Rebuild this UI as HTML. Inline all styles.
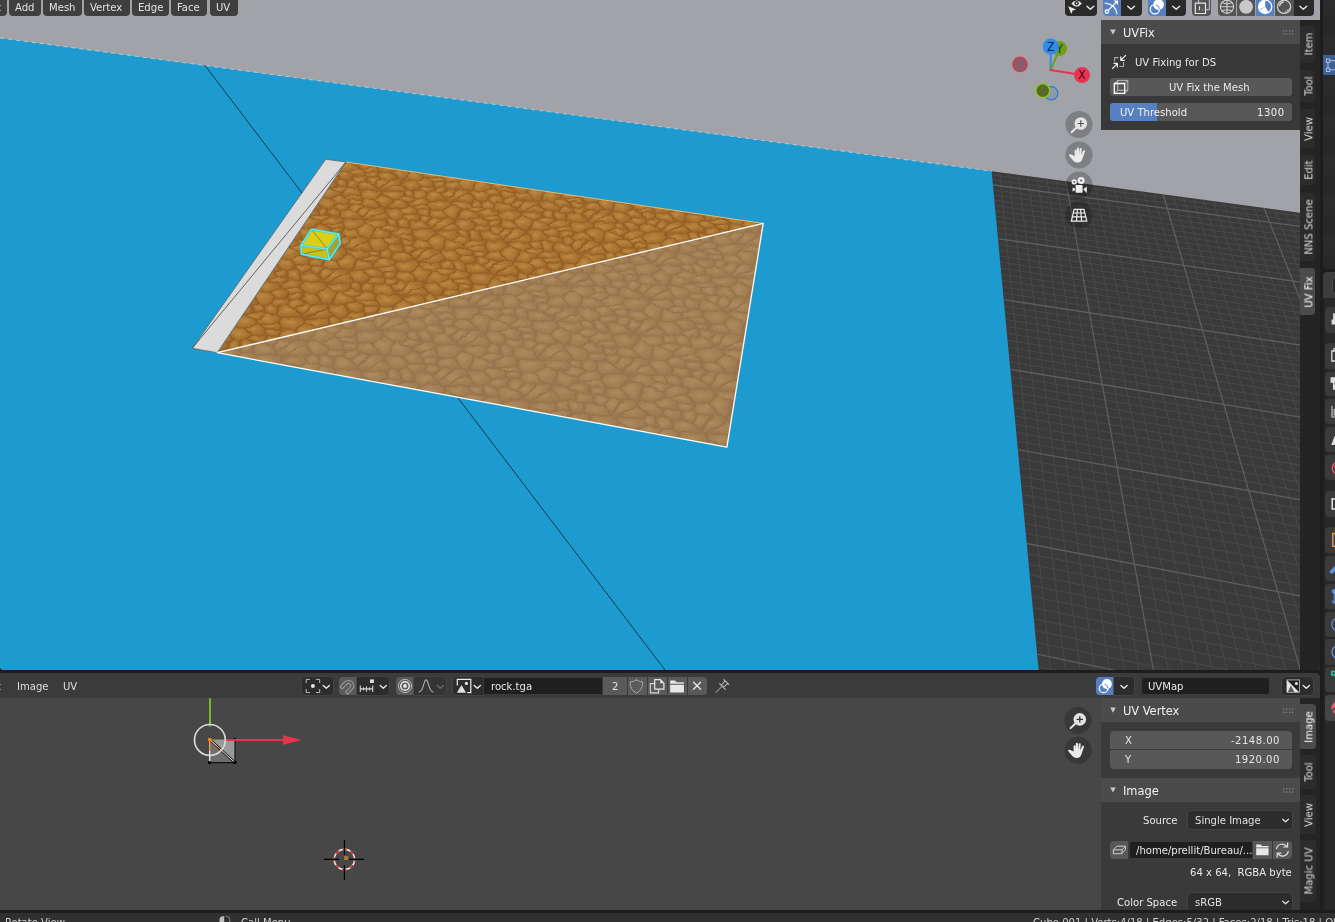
<!DOCTYPE html><html><head><meta charset="utf-8"><title>Blender</title><style>

*{box-sizing:border-box;margin:0;padding:0}
html,body{width:1335px;height:922px;overflow:hidden;background:#1d1d1d}
body{position:relative;font-family:"DejaVu Sans Condensed","Liberation Sans",sans-serif;font-size:11.2px;color:#e4e4e4;line-height:1}
.abs{position:absolute}
#v3d{position:absolute;left:0;top:0;width:1320px;height:670px;overflow:hidden;background:#a1a3a8;border-radius:0 0 4px 4px}
#img{position:absolute;left:0;top:673px;width:1320px;height:236.8px;overflow:hidden;background:#474747;border-radius:0 5px 0 0}
#props{position:absolute;left:1322.8px;top:0;width:13px;height:909.8px;background:#1d1d1d;overflow:hidden}
#status{position:absolute;left:0;top:912.5px;width:1335px;height:10px;background:#303030;overflow:hidden}
.t{position:absolute;white-space:nowrap;will-change:transform}
.btn{position:absolute;background:#585858;border-radius:3px}
svg{position:absolute;left:0;top:0;overflow:visible}

</style></head><body>
<div id="v3d">
<svg width="1320" height="670" viewBox="0 0 1320 670">
<defs><clipPath id="gclip"><polygon points="992,171.3 1320,215.4 1320,670 1039,670"/></clipPath></defs>
<polygon points="0,38.0 992,171.3 1039,670 0,670" fill="#1d9bd1"/>
<polygon points="991.6,171.3 1320,215.4 1320,670 1038.6,670" fill="#3a3a3a"/>
<line x1="0" y1="38.0" x2="992" y2="171.3" stroke="#fff" stroke-opacity="0.55" stroke-width="0.8" stroke-dasharray="4 4"/>
<g clip-path="url(#gclip)" fill="none">
<path d="M925.1 151.6L933.8 706.3M934.2 152.8L948.9 709.7M943.3 154.0L964.1 713.0M952.4 155.2L979.4 716.4M961.5 156.4L994.8 719.8M979.9 158.8L1025.8 726.7M989.1 160.0L1041.4 730.2M998.4 161.3L1057.1 733.7M1007.6 162.5L1072.9 737.1M1016.9 163.7L1088.8 740.7M1026.3 164.9L1104.7 744.2M1035.6 166.2L1120.7 747.7M1045.0 167.4L1136.8 751.3M1054.4 168.6L1153.0 754.9M1073.4 171.1L1185.6 762.1M1082.9 172.4L1202.0 765.8M1092.4 173.6L1218.5 769.4M1101.9 174.9L1235.1 773.1M1111.5 176.1L1251.8 776.8M1121.2 177.4L1268.6 780.5M1130.8 178.6L1285.4 784.3M1140.5 179.9L1302.4 788.0M1150.2 181.2L1319.4 791.8M1169.7 183.8L1353.8 799.4M1179.5 185.0L1371.1 803.3M1189.3 186.3L1388.5 807.1M1199.2 187.6L1406.0 811.0M1209.1 188.9L1423.6 814.9M1219.0 190.2L1441.2 818.8M1228.9 191.5L1459.0 822.7M1238.9 192.8L1476.9 826.7M1248.9 194.2L1494.9 830.7M1269.0 196.8L1531.1 838.7M1279.2 198.1L1549.3 842.8M1289.3 199.5L1567.7 846.8M1299.5 200.8L1586.2 850.9M1309.7 202.1L1604.7 855.1M1319.9 203.5L1623.4 859.2M1330.2 204.8L1642.2 863.3M1340.5 206.2L1661.0 867.5M1350.8 207.5L1680.0 871.7M943.3 154.0L1340.5 206.2M943.5 158.8L1343.1 211.5M943.6 163.5L1345.7 217.0M943.8 168.4L1348.3 222.4M944.0 173.3L1351.0 228.0M944.4 183.3L1356.5 239.3M944.6 188.3L1359.3 245.1M944.8 193.5L1362.2 250.9M944.9 198.7L1365.0 256.9M945.1 203.9L1367.9 262.9M945.3 209.3L1370.9 268.9M945.5 214.6L1373.9 275.1M945.7 220.1L1376.9 281.3M945.9 225.6L1379.9 287.6M946.4 236.9L1386.2 300.5M946.6 242.6L1389.4 307.1M946.8 248.4L1392.6 313.7M947.0 254.3L1395.9 320.5M947.2 260.2L1399.2 327.3M947.5 266.2L1402.5 334.3M947.7 272.3L1406.0 341.3M947.9 278.5L1409.4 348.4M948.2 284.8L1412.9 355.7M948.6 297.6L1420.1 370.4M948.9 304.1L1423.7 378.0M949.1 310.7L1427.4 385.6M949.4 317.4L1431.2 393.4M949.6 324.2L1435.0 401.3M949.9 331.0L1438.9 409.3M950.1 338.0L1442.8 417.4M950.4 345.1L1446.8 425.6M950.7 352.3L1450.9 434.0M951.2 366.9L1459.2 451.1M951.5 374.4L1463.4 459.9M951.8 382.0L1467.7 468.8M952.1 389.7L1472.1 477.8M952.4 397.5L1476.6 487.0M952.7 405.4L1481.1 496.3M953.0 413.5L1485.7 505.8M953.3 421.6L1490.4 515.4M953.6 429.9L1495.1 525.2M954.2 446.9L1504.8 545.3M954.5 455.5L1509.8 555.6M954.9 464.3L1514.9 566.0M955.2 473.3L1520.0 576.7M955.5 482.4L1525.3 587.5M955.9 491.6L1530.6 598.5M956.2 501.0L1536.1 609.7M956.6 510.5L1541.6 621.1M956.9 520.2L1547.2 632.7M957.7 540.1L1558.8 656.6M958.1 550.3L1564.7 668.8M958.5 560.6L1570.8 681.3M958.8 571.1L1576.9 694.0M959.2 581.9L1583.2 707.0M959.7 592.7L1589.6 720.2M960.1 603.8L1596.1 733.6M960.5 615.1L1602.8 747.4M960.9 626.6L1609.6 761.3M961.8 650.2L1623.5 790.2M962.2 662.3L1630.7 805.0M962.7 674.6L1638.1 820.2M963.2 687.2L1645.6 835.6M963.7 700.0L1653.2 851.4M964.1 713.0L1661.0 867.5" stroke="#494949" stroke-width="1"/>
<path d="M970.7 157.6L1010.3 723.3M1063.9 169.9L1169.2 758.5M1159.9 182.5L1336.6 795.6M1259.0 195.5L1512.9 834.7M944.2 178.3L1353.8 233.6M946.2 231.2L1383.0 294.0M948.4 291.1L1416.5 363.0M950.9 359.5L1455.0 442.5M953.9 438.3L1499.9 535.2M957.3 530.1L1552.9 644.5M961.4 638.3L1616.5 775.6" stroke="#5e5e5e" stroke-width="1.3"/>
</g>
<line x1="205" y1="65.5" x2="665" y2="670" stroke="#10222e" stroke-width="0.8"/>
</svg>
<svg width="1320" height="670" viewBox="0 0 1320 670">
<defs><radialGradient id="rg" cx="0.42" cy="0.42" r="0.65"><stop offset="0" stop-color="#ba8b46"/><stop offset="0.5" stop-color="#ab7833"/><stop offset="1" stop-color="#9f6b2c"/></radialGradient>
<filter id="rough" filterUnits="userSpaceOnUse" x="200" y="150" width="580" height="310"><feTurbulence type="fractalNoise" baseFrequency="0.11" numOctaves="2" seed="3" result="n"/><feDisplacementMap in="SourceGraphic" in2="n" scale="5.5" xChannelSelector="R" yChannelSelector="G" result="d"/><feGaussianBlur in="d" stdDeviation="0.7"/></filter>
<clipPath id="qclip"><polygon points="346.0,162.0 763.2,223.4 726.9,447.1 217.2,352.7"/></clipPath></defs>
<g clip-path="url(#qclip)"><g filter="url(#rough)"><rect x="190" y="140" width="600" height="330" fill="#965e28"/><g fill="url(#rg)">
<polygon points="339.5,179.7 335.0,174.1 318.2,180.7 335.3,180.8"/>
<polygon points="334.9,158.3 326.4,162.8 332.0,169.3 336.2,170.2 337.1,170.1 342.9,161.7"/>
<polygon points="320.9,207.6 316.4,201.6 298.9,208.6 316.5,208.7"/>
<polygon points="318.6,197.3 324.8,188.4 316.6,184.7 307.7,189.5 313.4,196.5 317.7,197.4"/>
<polygon points="301.0,237.3 296.5,230.9 278.2,238.4 296.4,238.5"/>
<polygon points="293.5,225.5 297.9,226.5 298.9,226.3 305.5,216.8 297.1,212.9 287.8,218.0"/>
<polygon points="256.1,270.3 274.9,270.4 279.7,269.2 275.2,262.3"/>
<polygon points="276.3,243.1 266.5,248.5 272.2,256.5 276.8,257.5 277.8,257.4 284.8,247.2"/>
<polygon points="252.4,295.9 232.4,304.5 251.9,304.7 256.9,303.3"/>
<polygon points="249.4,289.7 254.2,290.8 255.2,290.7 262.7,279.7 254.0,275.3 243.7,281.1"/>
<polygon points="227.1,341.5 232.3,340.0 227.8,332.1 206.8,341.3"/>
<polygon points="219.3,316.2 224.9,325.3 229.8,326.6 230.9,326.4 239.0,314.7 230.0,309.9"/>
<polygon points="204.7,364.9 213.5,352.3 204.3,347.1 192.9,353.9 198.6,363.8 203.6,365.1"/>
<polygon points="348.5,161.9 357.8,165.0 365.4,161.5 364.3,160.9 355.3,159.9"/>
<polygon points="334.9,155.3 335.7,157.5 344.6,161.2 346.4,161.4 353.9,159.2 352.4,155.4"/>
<polygon points="353.6,176.1 347.8,171.7 338.1,170.9 337.2,171.0 336.6,173.3 341.6,179.6 345.7,180.2 350.8,179.6"/>
<polygon points="395.1,163.6 379.8,163.9 377.4,167.1 381.2,171.5 390.0,171.9 398.7,167.0 397.6,164.5"/>
<polygon points="346.9,187.5 337.6,186.4 330.5,188.6 340.1,191.9 348.1,188.2"/>
<polygon points="346.4,162.2 344.9,162.1 339.3,170.1 348.1,170.8 357.8,168.2 357.0,165.8"/>
<polygon points="384.9,190.7 402.2,190.8 406.4,189.8 401.4,184.0"/>
<polygon points="365.8,176.7 355.5,176.5 352.9,179.8 358.8,181.7 366.1,181.3 367.2,177.2"/>
<polygon points="378.1,176.8 381.6,178.2 390.5,179.4 395.7,179.1 389.8,172.7 380.9,172.3"/>
<polygon points="344.8,181.0 341.0,180.5 336.8,181.5 338.3,185.6 346.3,186.5"/>
<polygon points="388.9,180.1 381.6,179.1 374.7,184.2 378.6,187.7"/>
<polygon points="382.0,190.6 400.7,183.0 401.1,180.7 397.1,179.9 391.3,180.3 379.7,188.9 380.0,189.8"/>
<polygon points="369.3,177.5 368.2,181.6 373.2,183.5 379.7,178.6 376.6,177.3"/>
<polygon points="397.9,179.1 402.3,180.0 403.1,179.9 408.3,171.3 400.0,167.9 391.7,172.4"/>
<polygon points="367.2,176.1 368.6,176.6 376.1,176.5 378.4,172.5 367.3,172.2"/>
<polygon points="366.7,171.3 379.2,171.7 375.6,167.6 362.6,169.1"/>
<polygon points="377.7,163.6 374.6,162.6 367.3,162.0 359.1,165.8 359.9,168.2 360.8,168.3 375.4,166.7"/>
<polygon points="377.7,189.5 377.5,188.8 372.7,184.4 366.8,182.2 359.6,182.6 358.9,188.7 362.2,189.8"/>
<polygon points="365.1,175.8 365.2,171.8 360.2,169.2 359.1,168.9 349.8,171.5 355.3,175.6"/>
<polygon points="334.7,181.7 316.7,181.5 317.5,183.9 326.5,187.9 328.4,188.0 336.2,185.7"/>
<polygon points="351.5,180.4 347.0,181.0 348.5,187.0 350.0,187.8 356.8,188.4 357.5,182.4"/>
<polygon points="332.5,207.4 335.5,203.7 329.6,199.0 319.6,198.2 318.7,198.3 318.0,200.7 323.1,207.5 327.3,208.1"/>
<polygon points="381.1,191.4 378.6,190.4 362.8,190.7 360.2,194.2 364.1,198.8 373.1,199.2 382.2,194.1"/>
<polygon points="321.2,220.6 329.5,216.6 328.3,215.9 318.8,214.7 311.4,217.0"/>
<polygon points="328.3,188.9 326.8,188.8 320.9,197.3 329.9,198.1 340.0,195.3 339.2,192.7"/>
<polygon points="367.5,219.3 385.3,219.5 389.7,218.3 384.7,212.2"/>
<polygon points="334.7,207.7 340.7,209.7 348.3,209.3 349.5,204.9 348.1,204.4 337.5,204.2"/>
<polygon points="363.8,199.7 360.8,204.4 364.3,206.0 373.6,207.3 378.9,206.9 372.9,200.1"/>
<polygon points="327.7,214.8 326.3,208.9 322.4,208.4 318.0,209.4 319.5,213.8"/>
<polygon points="364.4,207.0 357.2,212.4 361.1,216.1 371.9,208.0"/>
<polygon points="374.3,208.2 362.2,217.3 362.4,218.3 364.6,219.1 384.0,211.0 384.5,208.7 380.3,207.8"/>
<polygon points="359.2,205.0 351.6,205.2 350.5,209.6 355.6,211.6 362.4,206.4"/>
<polygon points="383.6,194.9 374.9,199.8 381.2,206.9 385.7,207.9 386.6,207.8 392.1,198.7"/>
<polygon points="358.7,204.1 361.2,199.9 349.7,199.5 349.6,203.7 351.0,204.2"/>
<polygon points="358.4,194.7 344.9,196.2 349.1,198.6 362.0,199.0"/>
<polygon points="358.2,193.7 360.7,190.4 357.5,189.3 349.9,188.7 341.4,192.7 342.2,195.3 343.1,195.4"/>
<polygon points="340.8,217.2 344.1,218.4 360.1,218.0 359.9,217.3 355.0,212.6 349.0,210.2 341.6,210.6"/>
<polygon points="347.4,203.4 347.5,199.2 342.4,196.3 341.3,196.1 331.7,198.8 337.3,203.2"/>
<polygon points="309.2,216.4 317.3,213.9 315.9,209.6 297.3,209.5 298.0,212.0 307.2,216.3"/>
<polygon points="338.6,216.8 339.4,210.4 333.3,208.3 328.5,208.9 330.0,215.3 331.5,216.2"/>
<polygon points="303.3,237.2 307.6,237.8 313.1,237.1 316.2,233.1 310.2,228.2 299.9,227.3 298.9,227.4 298.2,230.0"/>
<polygon points="344.7,219.3 342.0,223.0 345.8,227.9 355.2,228.4 364.7,222.9 363.6,220.0 361.1,219.0"/>
<polygon points="298.7,244.9 291.0,247.4 301.0,251.2 309.7,246.9 308.5,246.2"/>
<polygon points="321.0,224.2 320.3,221.5 309.1,217.4 307.5,217.3 301.3,226.4 310.6,227.2"/>
<polygon points="371.9,248.8 366.9,242.2 348.9,249.9 367.4,250.0"/>
<polygon points="330.6,234.5 329.2,233.9 318.2,233.7 315.3,237.4 321.5,239.6 329.3,239.2"/>
<polygon points="342.3,234.0 346.0,235.6 355.4,237.0 361.0,236.6 355.0,229.4 345.5,228.9"/>
<polygon points="299.4,244.0 307.9,245.1 306.6,238.7 302.6,238.2 298.0,239.3"/>
<polygon points="346.0,236.7 338.4,242.5 342.4,246.5 353.7,237.8"/>
<polygon points="343.7,248.8 345.9,249.7 366.2,241.0 366.7,238.5 362.4,237.5 356.2,238.0 343.5,247.8"/>
<polygon points="340.7,234.6 332.8,234.8 331.6,239.5 336.8,241.6 344.0,236.1"/>
<polygon points="366.1,223.8 357.0,229.0 363.4,236.6 368.0,237.7 368.9,237.5 374.8,227.8"/>
<polygon points="340.2,233.6 342.9,229.1 331.0,228.7 330.7,233.2 332.1,233.8"/>
<polygon points="326.1,225.2 330.4,227.7 343.7,228.2 340.1,223.6"/>
<polygon points="339.2,217.8 331.4,217.2 322.5,221.4 323.3,224.2 324.2,224.4 339.9,222.5 342.5,219.0"/>
<polygon points="330.0,240.2 322.3,240.6 321.3,247.6 324.8,248.9 341.3,248.5 341.1,247.7 336.2,242.7"/>
<polygon points="323.5,225.3 322.4,225.0 312.3,227.9 318.1,232.6 328.5,232.9 328.7,228.3"/>
<polygon points="297.2,244.1 295.8,239.5 276.5,239.4 277.3,242.1 286.7,246.6 288.7,246.8"/>
<polygon points="310.3,245.6 311.8,246.5 319.0,247.2 320.0,240.3 313.8,238.1 308.9,238.8"/>
<polygon points="295.5,264.7 289.4,259.3 278.8,258.4 277.8,258.5 276.9,261.3 282.1,269.0 286.5,269.7 292.2,269.0"/>
<polygon points="326.3,259.1 336.0,259.6 346.0,253.7 344.9,250.6 342.3,249.6 325.3,249.9 322.4,253.8"/>
<polygon points="279.3,284.0 288.5,279.5 287.3,278.7 277.1,277.3 269.1,280.0"/>
<polygon points="288.6,247.8 287.0,247.7 280.2,257.4 289.9,258.3 300.7,255.1 300.0,252.2"/>
<polygon points="348.1,282.8 352.9,281.5 347.8,274.4 329.0,282.6"/>
<polygon points="310.4,266.1 309.0,265.5 297.6,265.2 294.5,269.2 300.8,271.6 309.0,271.1"/>
<polygon points="326.3,267.3 336.1,268.8 341.8,268.4 335.8,260.6 325.8,260.2 322.6,265.6"/>
<polygon points="277.9,276.3 286.6,277.5 285.5,270.7 281.3,270.0 276.6,271.3"/>
<polygon points="326.3,268.4 318.3,274.7 322.3,279.0 334.3,269.6"/>
<polygon points="336.9,269.9 323.4,280.3 323.7,281.4 325.9,282.4 347.1,273.1 347.7,270.4 343.3,269.4"/>
<polygon points="324.2,267.8 320.8,266.2 312.7,266.4 311.3,271.4 316.6,273.7"/>
<polygon points="344.3,268.4 349.0,269.5 350.0,269.4 356.3,258.9 347.3,254.7 337.9,260.3"/>
<polygon points="323.2,260.4 310.9,260.0 310.6,264.8 312.0,265.3 320.3,265.2"/>
<polygon points="324.1,259.3 320.5,254.4 306.0,256.2 310.4,258.9"/>
<polygon points="302.3,252.1 303.1,255.1 304.1,255.3 320.3,253.3 323.1,249.5 319.7,248.3 311.7,247.6"/>
<polygon points="316.0,274.9 309.7,272.2 301.7,272.6 300.5,280.1 304.1,281.5 321.2,281.1 321.0,280.3"/>
<polygon points="303.3,256.3 302.1,256.0 291.7,259.1 297.5,264.1 308.3,264.4 308.6,259.5"/>
<polygon points="255.0,274.2 264.7,279.1 266.8,279.3 275.6,276.4 274.3,271.5 254.3,271.4"/>
<polygon points="290.7,279.0 298.2,279.7 299.3,272.4 292.9,270.0 287.8,270.7 289.1,278.0"/>
<polygon points="273.4,298.5 267.2,292.8 256.2,291.7 255.2,291.9 254.2,294.8 259.3,303.2 263.9,303.9 269.8,303.1"/>
<polygon points="301.5,286.8 305.4,292.5 315.4,293.0 325.9,286.7 324.8,283.4 322.2,282.3 304.6,282.6"/>
<polygon points="264.5,313.5 254.0,312.1 245.6,314.9 256.1,319.3 265.7,314.4"/>
<polygon points="279.0,288.2 278.3,285.1 266.6,280.4 264.9,280.3 257.7,290.7 267.7,291.7"/>
<polygon points="307.7,317.8 327.5,317.9 332.4,316.5 327.3,308.9"/>
<polygon points="287.1,305.4 288.8,300.0 287.3,299.4 275.6,299.1 272.2,303.4 278.7,305.9"/>
<polygon points="315.3,302.9 321.2,302.4 315.1,294.2 305.0,293.6 301.4,299.4 305.2,301.3"/>
<polygon points="258.5,304.3 253.6,305.6 254.8,311.0 263.8,312.2 262.8,304.9"/>
<polygon points="300.8,313.8 313.4,303.8 305.1,302.5 296.7,309.2"/>
<polygon points="304.4,317.5 326.6,307.5 327.3,304.6 322.7,303.5 316.1,304.1 301.9,315.3 302.1,316.5"/>
<polygon points="289.5,305.8 295.0,308.2 303.0,301.9 299.6,300.2 291.2,300.4"/>
<polygon points="328.7,303.7 329.7,303.5 336.5,292.3 327.3,287.8 317.4,293.8 323.8,302.5"/>
<polygon points="289.0,298.6 290.5,299.2 299.1,299.0 302.2,293.9 289.4,293.4"/>
<polygon points="284.4,289.4 288.9,292.3 303.1,292.8 299.5,287.5"/>
<polygon points="281.4,288.2 282.4,288.4 299.3,286.3 302.3,282.2 298.8,280.9 290.5,280.1 280.7,285.0"/>
<polygon points="299.6,316.2 299.4,315.3 294.3,309.5 287.9,306.6 279.5,307.0 278.1,315.1 281.8,316.6"/>
<polygon points="280.4,289.2 269.5,292.5 275.4,297.9 286.6,298.2 287.1,293.0 281.6,289.5"/>
<polygon points="230.5,305.7 231.2,308.7 241.0,314.0 243.2,314.2 252.4,311.1 251.2,305.8"/>
<polygon points="277.1,306.7 270.5,304.2 265.2,304.9 266.4,312.8 268.0,313.9 275.7,314.6"/>
<polygon points="249.6,334.8 243.3,328.7 231.9,327.6 230.8,327.7 229.8,330.9 234.8,339.9 239.6,340.6 245.7,339.8"/>
<polygon points="303.3,318.6 300.5,317.4 282.4,317.8 279.0,322.3 282.9,328.4 293.3,328.9 304.3,322.1"/>
<polygon points="241.2,351.9 239.9,351.0 229.1,349.5 220.3,352.5 231.1,357.2"/>
<polygon points="243.8,327.5 255.7,323.8 255.0,320.4 243.0,315.4 241.2,315.2 233.5,326.5"/>
<polygon points="284.7,355.6 305.2,355.8 310.4,354.3 305.2,346.1"/>
<polygon points="264.0,335.8 251.8,335.5 248.2,340.1 254.9,342.8 263.7,342.3 265.5,336.5"/>
<polygon points="278.6,335.9 282.5,337.9 292.9,339.6 299.1,339.1 293.0,330.2 282.5,329.6"/>
<polygon points="228.8,342.5 230.0,348.3 239.3,349.6 238.4,341.8 234.0,341.0"/>
<polygon points="273.5,346.4 277.6,351.4 291.0,340.6 282.4,339.2"/>
<polygon points="281.3,355.3 304.6,344.6 305.4,341.5 300.6,340.3 293.7,340.8 278.8,353.0 279.0,354.2"/>
<polygon points="266.1,342.7 271.8,345.3 280.2,338.5 276.7,336.7 268.0,336.8"/>
<polygon points="305.7,323.3 295.3,329.8 301.8,339.2 306.8,340.4 307.9,340.3 315.2,328.2"/>
<polygon points="265.7,334.9 267.3,335.6 276.2,335.4 279.5,329.9 266.4,329.4"/>
<polygon points="261.2,325.0 265.8,328.1 280.5,328.7 276.9,323.0"/>
<polygon points="259.2,324.0 276.7,321.7 280.0,317.4 276.4,315.9 267.8,315.1 257.5,320.4 258.1,323.7"/>
<polygon points="264.4,343.5 255.7,344.0 254.1,352.7 257.9,354.3 276.3,353.9 276.2,352.9 271.0,346.7"/>
<polygon points="263.3,334.5 263.9,328.9 258.3,325.1 257.1,324.8 245.7,328.4 251.7,334.2"/>
<polygon points="226.3,342.8 204.9,342.6 205.5,345.9 215.6,351.5 217.8,351.8 227.5,348.4"/>
<polygon points="253.2,343.7 246.5,341.0 240.9,341.8 241.9,350.3 243.6,351.4 251.6,352.2"/>
<polygon points="280.1,356.5 277.3,355.2 258.4,355.6 254.8,360.5 258.7,367.1 269.5,367.7 281.1,360.3"/>
<polygon points="207.4,365.0 218.1,366.1 230.5,362.1 230.0,358.4 217.6,353.1 215.8,352.9"/>
<polygon points="282.5,361.6 271.5,368.5 278.0,378.7 283.2,380.1 284.4,379.9 292.2,366.9"/>
<polygon points="256.2,367.4 252.6,361.2 236.2,363.4 240.9,366.8"/>
<polygon points="255.9,355.2 252.2,353.6 243.3,352.7 232.5,358.4 233.1,362.0 234.2,362.3 252.5,359.9"/>
<polygon points="414.0,171.5 423.6,174.7 431.1,171.1 430.0,170.5 420.8,169.4"/>
<polygon points="417.5,164.9 399.8,164.8 400.8,167.0 410.0,170.9 411.9,171.0 419.3,168.7"/>
<polygon points="402.9,183.2 408.5,189.7 412.7,190.2 417.8,189.6 420.3,186.0 414.0,181.6 404.2,180.7 403.3,180.9"/>
<polygon points="447.8,181.3 456.8,181.7 465.2,176.8 463.9,174.2 461.3,173.3 445.8,173.6 443.6,176.9"/>
<polygon points="415.7,198.4 414.5,197.8 405.0,196.6 398.0,198.8 407.9,202.2"/>
<polygon points="411.9,171.9 410.4,171.8 405.4,179.9 414.3,180.7 423.9,178.0 422.9,175.5"/>
<polygon points="470.6,201.2 474.8,200.1 469.3,194.2 453.1,201.1"/>
<polygon points="433.4,191.4 434.1,187.2 432.7,186.7 422.3,186.5 419.9,189.9 426.0,191.8"/>
<polygon points="448.8,188.2 457.9,189.5 463.1,189.1 456.7,182.6 447.5,182.3 445.2,186.8"/>
<polygon points="413.7,196.7 411.8,191.1 407.9,190.5 403.7,191.6 405.6,195.8"/>
<polygon points="448.9,189.2 442.3,194.4 446.5,198.0 456.4,190.2"/>
<polygon points="450.2,200.9 468.5,193.1 468.8,190.8 464.6,190.0 458.8,190.4 447.7,199.2 448.1,200.1"/>
<polygon points="447.0,188.7 443.7,187.3 436.3,187.5 435.5,191.7 440.7,193.6"/>
<polygon points="475.3,181.2 466.6,177.6 458.6,182.3 465.4,189.2 469.9,190.1 470.7,190.0"/>
<polygon points="445.2,182.4 433.8,182.1 434.1,186.1 435.5,186.6 443.1,186.4"/>
<polygon points="445.8,181.5 441.9,177.4 428.8,178.9 433.2,181.2"/>
<polygon points="425.0,175.5 426.0,178.0 427.0,178.1 441.6,176.5 443.7,173.3 440.5,172.3 433.0,171.7"/>
<polygon points="430.2,200.1 445.8,199.8 445.5,199.1 440.3,194.6 434.2,192.3 426.9,192.7 426.7,199.0"/>
<polygon points="431.9,185.8 431.7,181.7 426.4,179.0 425.3,178.7 416.1,181.3 422.0,185.6"/>
<polygon points="383.4,191.6 384.4,194.0 393.8,198.1 395.8,198.3 403.5,195.9 401.7,191.8"/>
<polygon points="424.5,198.6 424.7,192.5 418.6,190.5 414.0,191.1 416.1,197.2 417.6,198.0"/>
<polygon points="397.8,209.5 387.7,208.7 386.7,208.8 386.2,211.3 391.9,218.2 396.2,218.8 401.5,218.1 404.2,214.3"/>
<polygon points="430.8,201.1 428.5,204.6 432.7,209.3 441.9,209.7 450.7,204.5 449.4,201.7 446.8,200.8"/>
<polygon points="397.9,226.8 388.2,225.6 380.8,228.0 391.0,231.6 399.1,227.5"/>
<polygon points="408.1,205.7 407.1,203.1 395.8,199.2 394.2,199.1 388.9,207.8 398.1,208.6"/>
<polygon points="460.3,229.3 454.7,223.0 437.8,230.4 455.9,230.5"/>
<polygon points="418.4,215.6 417.0,215.0 406.3,214.8 403.7,218.4 410.0,220.5 417.6,220.1"/>
<polygon points="432.4,210.3 429.9,215.1 433.6,216.7 443.0,218.0 448.3,217.6 441.8,210.7"/>
<polygon points="397.2,225.7 395.3,219.7 391.3,219.1 387.0,220.2 388.8,224.7"/>
<polygon points="431.1,227.1 441.4,218.8 433.7,217.7 426.8,223.3"/>
<polygon points="454.2,219.4 449.9,218.5 443.8,218.9 432.3,228.3 432.6,229.3 434.8,230.2 453.9,221.8"/>
<polygon points="420.7,215.9 419.8,220.4 425.1,222.4 431.7,217.1 428.3,215.7"/>
<polygon points="455.3,218.6 456.2,218.5 461.1,209.2 452.1,205.3 443.8,210.4 450.7,217.7"/>
<polygon points="418.2,210.1 418.5,214.4 419.9,214.9 427.7,214.7 429.9,210.5"/>
<polygon points="426.7,205.1 413.1,206.7 417.6,209.1 430.6,209.5"/>
<polygon points="428.6,200.7 425.3,199.6 417.6,199.0 409.3,203.1 410.3,205.7 411.2,205.9 426.4,204.1"/>
<polygon points="430.3,229.0 430.0,228.3 424.7,223.5 418.4,221.0 410.9,221.4 410.6,228.1 414.1,229.4"/>
<polygon points="410.6,206.8 409.5,206.5 399.9,209.3 406.0,213.8 416.2,214.1 416.0,209.7"/>
<polygon points="366.0,220.3 366.9,222.8 376.6,227.2 378.6,227.4 386.6,224.8 384.8,220.4"/>
<polygon points="399.6,226.2 401.2,227.1 408.3,227.8 408.6,221.2 402.3,219.1 397.6,219.7"/>
<polygon points="370.0,238.5 369.0,238.6 368.5,241.3 374.2,248.7 378.6,249.3 384.1,248.6 387.0,244.5 380.5,239.4"/>
<polygon points="434.0,231.1 431.3,230.0 414.7,230.4 412.3,234.1 416.6,239.2 426.1,239.6 435.3,234.0"/>
<polygon points="373.0,263.0 381.5,258.7 380.2,257.9 370.2,256.6 362.5,259.1"/>
<polygon points="377.0,228.3 371.3,237.6 380.8,238.4 391.2,235.4 390.2,232.5 378.6,228.4"/>
<polygon points="444.7,260.6 439.0,253.8 421.5,261.7 440.2,261.8"/>
<polygon points="401.7,245.9 400.2,245.3 389.1,245.0 386.4,248.9 392.8,251.1 400.7,250.7"/>
<polygon points="432.6,248.0 426.0,240.6 416.3,240.2 413.5,245.4 417.3,247.0 427.0,248.5"/>
<polygon points="373.6,249.7 369.1,250.8 370.9,255.6 379.5,256.7 377.7,250.3"/>
<polygon points="414.5,258.2 425.4,249.3 417.4,248.1 410.2,254.1"/>
<polygon points="438.2,252.6 438.6,250.0 434.1,249.0 427.9,249.5 415.8,259.5 416.1,260.6 418.4,261.5"/>
<polygon points="411.9,246.0 404.0,246.2 403.0,251.0 408.5,253.2 415.3,247.5"/>
<polygon points="439.8,249.1 440.7,249.0 445.9,239.0 436.7,234.9 428.0,240.3 435.0,248.1"/>
<polygon points="413.7,240.4 401.6,240.0 401.7,244.6 403.2,245.1 411.3,245.0"/>
<polygon points="410.4,234.7 396.4,236.4 400.9,239.0 414.4,239.4"/>
<polygon points="410.1,233.6 412.5,230.0 409.1,228.8 401.1,228.1 392.4,232.5 393.4,235.3 394.4,235.5"/>
<polygon points="413.4,259.5 408.0,254.3 401.5,251.7 393.7,252.1 393.3,259.3 396.9,260.6 413.7,260.3"/>
<polygon points="399.4,244.2 399.3,239.6 393.8,236.5 392.6,236.2 382.7,239.2 388.9,244.0"/>
<polygon points="366.8,251.1 347.3,250.9 348.3,253.7 358.2,258.3 360.3,258.5 368.6,255.8"/>
<polygon points="391.0,258.9 391.4,251.9 384.9,249.6 380.0,250.3 382.0,257.3 383.6,258.2"/>
<polygon points="359.8,282.0 365.5,281.3 368.5,276.9 361.9,271.4 351.1,270.4 350.1,270.5 349.5,273.4 355.2,281.3"/>
<polygon points="414.7,261.3 397.6,261.7 394.9,265.7 399.3,271.1 409.1,271.6 418.8,265.6 417.4,262.4"/>
<polygon points="350.9,289.8 342.9,292.6 353.7,296.7 362.6,292.0 361.3,291.2"/>
<polygon points="373.1,267.0 372.1,264.0 360.2,259.6 358.5,259.4 352.5,269.4 362.3,270.3"/>
<polygon points="423.3,295.4 428.0,294.1 422.2,286.8 403.9,295.3"/>
<polygon points="382.7,283.5 383.8,278.3 382.3,277.7 370.7,277.4 367.9,281.6 374.5,283.9"/>
<polygon points="399.9,279.6 409.9,281.1 415.7,280.6 409.0,272.7 398.9,272.3 396.0,277.8"/>
<polygon points="351.6,288.8 360.5,290.0 358.8,283.0 354.6,282.4 349.9,283.7"/>
<polygon points="396.8,291.5 408.2,282.0 400.0,280.7 392.4,287.1"/>
<polygon points="400.7,295.1 421.5,285.5 421.9,282.7 417.3,281.7 410.8,282.2 398.1,292.9 398.4,294.1"/>
<polygon points="385.0,283.8 390.6,286.2 397.9,280.1 394.3,278.5 386.1,278.6"/>
<polygon points="423.1,281.8 424.1,281.7 429.7,271.0 420.2,266.6 411.1,272.3 418.2,280.7"/>
<polygon points="385.3,277.5 393.7,277.4 396.3,272.4 383.8,272.0 383.8,276.9"/>
<polygon points="378.4,268.1 383.1,270.9 397.1,271.4 393.0,266.3"/>
<polygon points="375.4,267.0 376.4,267.2 392.7,265.2 395.3,261.3 391.7,260.0 383.5,259.3 374.5,264.0"/>
<polygon points="395.9,293.8 395.6,292.9 390.1,287.4 383.5,284.6 375.4,285.0 374.8,292.7 378.5,294.1"/>
<polygon points="374.5,268.0 364.2,271.1 370.5,276.3 381.4,276.6 381.4,271.6 375.7,268.2"/>
<polygon points="349.3,288.9 347.5,283.9 327.3,283.7 328.3,286.7 338.4,291.7 340.6,291.9"/>
<polygon points="372.4,292.3 373.0,284.8 366.3,282.3 361.2,283.0 363.1,290.6 364.8,291.6"/>
<polygon points="329.8,304.8 329.1,307.8 334.9,316.4 339.6,317.1 345.5,316.3 348.8,311.6 342.0,305.7 330.9,304.6"/>
<polygon points="401.0,299.5 399.7,296.1 396.9,294.9 379.2,295.3 376.4,299.6 380.8,305.4 390.9,306.0"/>
<polygon points="321.9,328.5 332.9,332.9 342.2,327.9 340.9,327.0 330.2,325.5"/>
<polygon points="340.5,293.0 338.8,292.9 332.3,303.6 342.4,304.6 353.7,301.0 352.7,297.8"/>
<polygon points="404.2,322.3 385.1,331.4 405.2,331.5 410.1,330.1"/>
<polygon points="364.5,313.1 363.0,312.5 351.0,312.2 348.0,316.6 354.8,319.2 363.3,318.7"/>
<polygon points="380.3,306.6 377.2,312.6 381.2,314.5 391.6,316.1 397.6,315.6 390.8,307.1"/>
<polygon points="329.2,318.9 331.0,324.4 340.2,325.7 338.5,318.2 334.2,317.5"/>
<polygon points="377.8,327.3 389.8,317.1 381.3,315.7 373.3,322.6"/>
<polygon points="403.5,320.9 404.0,317.9 399.2,316.8 392.5,317.3 379.0,328.9 379.4,330.1 381.7,331.1"/>
<polygon points="375.5,313.3 366.9,313.5 365.7,319.0 371.5,321.6 379.1,315.1"/>
<polygon points="405.3,316.9 406.3,316.8 412.3,305.2 402.6,300.6 393.0,306.7 400.2,315.7"/>
<polygon points="377.6,306.8 364.7,306.4 364.6,311.7 366.1,312.3 374.8,312.1"/>
<polygon points="378.4,305.7 374.3,300.3 359.2,302.2 364.0,305.2"/>
<polygon points="374.1,299.1 376.8,294.9 373.1,293.5 364.7,292.7 355.2,297.8 356.1,301.0 357.2,301.2"/>
<polygon points="376.5,328.8 370.9,322.9 364.1,319.9 355.7,320.4 354.9,328.7 358.7,330.2 376.8,329.8"/>
<polygon points="362.1,311.3 362.2,305.9 356.4,302.3 355.2,302.0 344.4,305.4 350.8,311.0"/>
<polygon points="305.9,319.0 306.8,322.1 317.2,327.5 319.4,327.7 328.5,324.6 326.8,319.1"/>
<polygon points="341.0,318.2 342.8,326.3 344.5,327.4 352.4,328.2 353.2,320.1 346.3,317.5"/>
<polygon points="313.0,354.1 317.8,354.9 324.0,354.0 327.5,348.9 320.6,342.6 309.1,341.5 307.9,341.6 307.1,344.9"/>
<polygon points="382.0,335.9 380.7,332.3 377.8,331.0 359.4,331.4 356.4,336.0 360.8,342.3 371.4,342.9"/>
<polygon points="299.2,367.1 310.5,372.0 320.3,366.5 319.0,365.6 307.9,364.0"/>
<polygon points="319.3,329.0 317.5,328.8 310.6,340.3 321.1,341.4 332.8,337.6 331.9,334.1"/>
<polygon points="364.7,370.3 385.6,370.5 390.8,368.9 384.8,360.5"/>
<polygon points="333.5,357.1 342.4,356.6 343.8,350.6 342.2,349.9 329.8,349.6 326.6,354.4"/>
<polygon points="371.2,344.1 360.3,343.6 357.0,350.0 361.1,352.1 371.9,353.8 378.1,353.3"/>
<polygon points="307.0,356.8 308.7,362.7 318.3,364.1 316.7,356.1 312.2,355.3"/>
<polygon points="357.3,365.9 369.9,354.8 361.2,353.4 352.7,360.8"/>
<polygon points="361.3,370.0 384.1,359.0 384.6,355.7 379.7,354.5 372.8,355.1 358.5,367.6 358.8,368.9"/>
<polygon points="350.8,359.7 358.9,352.7 355.1,350.8 346.3,351.0 344.9,357.0"/>
<polygon points="393.5,342.1 383.5,337.1 373.5,343.7 380.8,353.4 386.0,354.7 387.1,354.5"/>
<polygon points="357.5,343.8 344.1,343.3 343.9,349.0 345.5,349.7 354.5,349.5"/>
<polygon points="358.4,342.6 354.3,336.7 338.5,338.8 343.4,342.0"/>
<polygon points="336.4,337.8 354.0,335.5 357.0,331.0 353.2,329.5 344.4,328.6 334.4,334.1 335.3,337.5"/>
<polygon points="355.9,367.5 350.2,361.1 343.2,357.9 334.5,358.4 333.5,367.4 337.4,369.0 356.1,368.5"/>
<polygon points="341.4,348.6 341.6,342.8 335.6,338.9 334.4,338.6 323.1,342.3 329.6,348.3"/>
<polygon points="282.8,356.9 283.6,360.3 294.3,366.1 296.7,366.4 306.1,362.9 304.5,357.1"/>
<polygon points="319.3,356.1 321.0,364.8 322.7,366.0 330.9,366.8 331.9,358.1 324.8,355.3"/>
<polygon points="360.2,371.2 357.2,369.9 338.1,370.3 334.8,375.3 339.3,382.1 350.3,382.7 361.5,375.2"/>
<polygon points="296.5,367.7 294.6,367.5 287.1,380.0 298.0,381.1 310.3,377.0 309.5,373.2"/>
<polygon points="373.3,381.9 363.0,376.4 352.5,383.6 359.8,394.1 365.2,395.5 366.3,395.3"/>
<polygon points="336.8,382.4 332.6,376.1 316.2,378.3 321.3,381.8"/>
<polygon points="314.1,377.2 332.4,374.7 335.6,369.8 331.7,368.2 322.6,367.3 312.1,373.2 312.9,376.9"/>
<polygon points="498.4,181.0 497.1,180.4 487.7,179.3 481.0,181.4 491.1,184.6"/>
<polygon points="478.9,180.9 486.2,178.5 484.0,174.6 466.1,174.5 467.3,176.8 476.9,180.7"/>
<polygon points="488.6,196.2 481.9,191.7 471.9,190.8 471.0,190.9 470.7,193.3 477.0,200.0 481.2,200.6 486.3,199.9"/>
<polygon points="516.1,191.4 525.1,191.8 533.3,186.8 531.7,184.2 529.1,183.2 513.4,183.5 511.5,186.9"/>
<polygon points="474.0,207.1 467.0,209.4 477.3,212.8 484.9,208.9 483.6,208.3"/>
<polygon points="490.4,185.5 478.9,181.8 477.4,181.6 473.0,190.0 482.1,190.8 491.6,188.0"/>
<polygon points="544.9,210.6 538.8,204.6 523.0,211.6 540.8,211.7"/>
<polygon points="501.2,196.9 490.7,196.7 488.5,200.2 494.8,202.1 502.3,201.8 502.7,197.4"/>
<polygon points="515.8,192.4 513.8,197.0 517.6,198.5 527.0,199.8 532.2,199.4 525.1,192.8"/>
<polygon points="474.5,206.2 482.8,207.2 480.4,201.4 476.5,200.8 472.3,201.9"/>
<polygon points="525.5,200.5 517.8,199.5 511.6,204.8 516.1,208.5"/>
<polygon points="533.7,200.3 527.9,200.7 517.4,209.7 517.9,210.6 520.1,211.4 538.0,203.5 538.1,201.1"/>
<polygon points="512.4,197.6 504.9,197.7 504.5,202.0 509.9,204.0 515.8,199.0"/>
<polygon points="534.5,199.5 539.1,200.4 540.0,200.3 543.9,191.3 534.8,187.6 527.0,192.5"/>
<polygon points="513.5,192.5 502.0,192.2 502.6,196.3 504.0,196.8 511.7,196.7"/>
<polygon points="514.1,191.6 509.8,187.4 496.6,188.9 501.2,191.2"/>
<polygon points="509.4,186.5 511.3,183.2 507.9,182.1 500.3,181.5 492.5,185.5 493.7,188.0 494.7,188.2"/>
<polygon points="495.8,203.1 496.2,209.5 499.7,210.7 515.5,210.4 515.2,209.6 509.5,205.0 503.2,202.7"/>
<polygon points="494.2,189.0 493.1,188.8 484.0,191.4 490.3,195.8 500.3,196.0 499.7,191.8"/>
<polygon points="472.4,206.3 470.2,202.1 451.7,202.0 452.9,204.4 462.8,208.6 464.8,208.8"/>
<polygon points="485.2,207.7 486.8,208.5 493.9,209.1 493.6,202.8 487.2,200.8 482.6,201.4"/>
<polygon points="467.7,220.3 457.4,219.4 456.5,219.5 456.1,222.1 462.5,229.2 466.9,229.8 472.2,229.1 474.6,225.2"/>
<polygon points="519.3,212.3 516.6,211.3 500.4,211.6 498.4,215.2 503.0,220.1 512.4,220.5 520.9,215.1"/>
<polygon points="469.2,238.0 459.3,236.8 452.0,239.2 462.6,242.9 470.5,238.8"/>
<polygon points="477.8,216.4 476.6,213.7 464.8,209.8 463.2,209.6 458.6,218.6 468.0,219.4"/>
<polygon points="509.9,241.7 528.2,241.8 532.6,240.6 526.4,234.1"/>
<polygon points="487.6,226.0 476.7,225.7 474.4,229.4 480.9,231.5 488.6,231.1 489.1,226.5"/>
<polygon points="519.5,228.6 512.4,221.5 502.9,221.0 500.6,226.0 504.5,227.6 514.2,229.0"/>
<polygon points="468.4,236.9 466.0,230.7 461.9,230.1 457.6,231.3 459.8,235.9"/>
<polygon points="502.8,238.3 512.6,229.8 504.7,228.7 498.2,234.4"/>
<polygon points="506.9,241.4 525.5,232.9 525.6,230.4 521.2,229.5 515.1,230.0 504.1,239.6 504.6,240.6"/>
<polygon points="491.4,226.8 490.9,231.4 496.4,233.5 502.6,228.1 499.1,226.6"/>
<polygon points="526.7,229.6 527.6,229.5 531.8,219.9 522.4,216.0 514.4,221.2 521.9,228.6"/>
<polygon points="488.5,220.9 489.0,225.3 490.5,225.8 498.4,225.7 500.3,221.3"/>
<polygon points="483.0,217.4 487.7,219.9 501.0,220.3 496.6,215.8"/>
<polygon points="481.0,216.6 496.2,214.8 498.2,211.3 494.7,210.2 486.9,209.5 478.8,213.7 480.0,216.4"/>
<polygon points="482.2,239.4 485.8,240.6 502.2,240.3 501.8,239.5 496.0,234.6 489.5,232.1 481.9,232.5"/>
<polygon points="480.5,217.5 479.3,217.2 469.9,220.1 476.4,224.7 486.7,224.9 486.2,220.5"/>
<polygon points="455.5,231.5 436.4,231.3 437.5,234.0 447.7,238.4 449.7,238.6 457.6,236.0"/>
<polygon points="470.9,237.4 472.6,238.4 479.8,239.0 479.6,232.3 473.0,230.1 468.3,230.7"/>
<polygon points="447.0,260.4 451.5,261.1 457.0,260.4 459.6,256.2 452.6,250.9 441.9,250.0 440.9,250.1 440.6,252.8"/>
<polygon points="503.3,241.3 486.6,241.7 484.3,245.5 489.1,250.7 498.8,251.2 507.6,245.4 506.1,242.4"/>
<polygon points="455.2,270.7 453.8,269.9 443.5,268.6 436.0,271.2 446.9,275.2"/>
<polygon points="463.1,246.8 461.9,243.9 449.8,239.6 448.1,239.5 443.2,249.1 452.8,249.9"/>
<polygon points="519.3,272.7 513.0,265.7 495.9,273.8 514.9,273.9"/>
<polygon points="461.8,256.7 459.4,260.7 466.0,262.9 474.0,262.5 474.6,257.6 473.1,257.0"/>
<polygon points="500.5,260.2 506.1,259.8 498.7,252.2 488.9,251.7 486.5,257.1 490.5,258.8"/>
<polygon points="446.4,261.5 441.9,262.7 444.1,267.6 453.0,268.7 450.6,262.1"/>
<polygon points="498.8,261.1 490.7,259.9 483.9,266.0 488.6,270.2"/>
<polygon points="501.4,261.3 489.9,271.6 490.4,272.6 492.7,273.6 512.2,264.4 512.3,261.8 507.7,260.8"/>
<polygon points="488.6,259.3 484.9,257.7 476.9,257.9 476.4,262.8 482.1,265.1"/>
<polygon points="509.2,246.4 500.8,251.9 508.5,259.9 513.4,260.9 514.4,260.8 518.8,250.5"/>
<polygon points="474.0,251.5 474.5,256.3 476.0,256.8 484.2,256.7 486.3,252.0"/>
<polygon points="468.4,247.8 473.3,250.5 486.9,250.9 482.5,246.1"/>
<polygon points="472.6,239.4 464.1,243.9 465.4,246.7 466.4,246.9 482.1,245.0 484.3,241.3 480.7,240.1"/>
<polygon points="487.6,271.5 481.6,266.2 474.9,263.6 467.0,264.0 467.2,271.4 471.0,272.7 487.9,272.3"/>
<polygon points="465.8,247.9 464.6,247.7 454.8,250.7 461.4,255.7 472.1,255.9 471.6,251.1"/>
<polygon points="439.7,262.9 419.9,262.8 421.1,265.6 431.5,270.4 433.6,270.5 441.8,267.7"/>
<polygon points="464.7,263.7 457.9,261.4 453.0,262.1 455.5,269.3 457.3,270.3 464.8,270.9"/>
<polygon points="435.1,294.7 440.8,293.9 443.5,289.4 436.4,283.8 425.3,282.7 424.3,282.9 423.9,285.8 430.4,294.0"/>
<polygon points="491.9,274.6 489.0,273.4 471.7,273.8 469.3,277.9 474.2,283.5 484.2,284.0 493.5,277.8"/>
<polygon points="418.8,305.5 430.0,309.8 438.7,305.0 437.3,304.1 426.6,302.7"/>
<polygon points="436.6,282.7 447.3,279.3 446.1,276.2 433.7,271.6 431.9,271.5 426.6,281.7"/>
<polygon points="500.5,308.4 505.2,307.1 498.7,299.6 480.8,308.3"/>
<polygon points="450.1,296.6 458.3,296.2 459.0,290.8 457.5,290.2 445.8,289.9 443.2,294.2"/>
<polygon points="473.9,284.7 471.4,290.3 475.5,292.2 485.8,293.7 491.6,293.3 484.1,285.1"/>
<polygon points="427.3,301.6 436.4,302.8 434.1,295.7 429.8,295.0 425.1,296.3"/>
<polygon points="473.3,304.4 484.1,294.6 475.7,293.3 468.5,299.9"/>
<polygon points="475.1,307.0 477.6,308.0 497.8,298.2 498.0,295.4 493.3,294.3 486.8,294.8 474.7,305.9"/>
<polygon points="466.6,298.9 473.5,292.7 469.7,291.0 461.4,291.2 460.8,296.5"/>
<polygon points="495.1,278.8 486.3,284.7 494.2,293.3 499.2,294.5 500.2,294.3 505.0,283.3"/>
<polygon points="458.5,284.4 459.0,289.5 460.6,290.1 469.0,289.9 471.2,284.8"/>
<polygon points="452.8,280.4 457.8,283.2 471.9,283.7 467.4,278.6"/>
<polygon points="465.6,272.1 457.3,271.4 448.5,276.2 449.7,279.2 450.7,279.5 467.1,277.4 469.3,273.4"/>
<polygon points="451.1,305.7 455.0,307.1 472.6,306.7 472.2,305.8 466.2,300.2 459.3,297.3 451.1,297.8"/>
<polygon points="445.4,288.8 456.5,289.1 456.1,283.9 450.1,280.5 448.9,280.2 438.6,283.5"/>
<polygon points="416.4,304.8 424.9,301.8 422.8,296.6 402.3,296.4 403.5,299.4 414.1,304.6"/>
<polygon points="439.1,303.4 440.8,304.5 448.6,305.2 448.6,297.5 441.7,295.0 436.6,295.7"/>
<polygon points="406.0,321.2 412.5,330.0 417.4,330.7 423.3,329.9 426.2,325.0 418.9,319.0 407.5,317.9 406.5,318.0"/>
<polygon points="458.2,318.7 468.5,319.2 478.2,312.6 476.7,309.1 473.7,307.9 455.8,308.3 453.2,312.7"/>
<polygon points="419.5,340.9 408.5,339.4 400.3,342.4 411.9,347.0 420.9,341.8"/>
<polygon points="408.9,316.8 419.3,317.8 430.4,314.2 429.2,310.9 416.4,306.0 414.6,305.8"/>
<polygon points="483.3,336.1 464.6,345.4 485.0,345.5 489.9,344.1"/>
<polygon points="442.3,326.6 440.7,326.0 428.6,325.7 425.8,330.2 432.9,332.8 441.5,332.3"/>
<polygon points="455.2,326.0 459.4,328.0 470.0,329.7 476.0,329.2 468.5,320.4 457.9,319.9"/>
<polygon points="411.9,331.1 407.0,332.5 409.2,338.2 418.7,339.5 416.4,331.8"/>
<polygon points="459.5,329.3 452.0,336.4 456.9,341.2 468.2,330.7"/>
<polygon points="458.3,342.8 458.7,344.1 461.2,345.1 482.4,334.6 482.7,331.5 477.8,330.4 471.0,330.9"/>
<polygon points="453.4,326.8 444.8,327.0 444.0,332.7 450.1,335.3 457.3,328.6"/>
<polygon points="483.9,330.5 485.0,330.4 490.1,318.5 479.9,313.7 470.7,320.0 478.7,329.3"/>
<polygon points="452.7,325.6 455.1,320.2 441.9,319.7 442.3,325.1 443.9,325.8"/>
<polygon points="455.8,319.0 451.3,313.4 436.1,315.4 441.2,318.4"/>
<polygon points="433.9,314.4 450.9,312.2 453.3,307.9 449.5,306.5 440.9,305.7 431.6,310.8 432.8,314.1"/>
<polygon points="449.5,336.6 442.4,333.6 434.0,334.1 433.8,342.6 437.8,344.1 456.1,343.7 455.7,342.7"/>
<polygon points="439.8,324.7 439.4,319.2 433.2,315.5 432.0,315.2 421.3,318.7 428.3,324.4"/>
<polygon points="383.4,332.6 384.5,335.9 395.5,341.4 397.8,341.6 406.7,338.4 404.6,332.8"/>
<polygon points="418.9,331.8 421.4,340.2 423.2,341.3 431.3,342.1 431.4,333.7 424.3,331.1"/>
<polygon points="398.3,369.6 404.5,368.7 407.6,363.4 400.2,356.9 388.4,355.7 387.2,355.9 386.7,359.3 393.3,368.8"/>
<polygon points="457.2,345.0 438.6,345.4 435.9,350.2 440.9,356.6 451.7,357.2 461.9,350.0 460.3,346.3"/>
<polygon points="380.4,382.2 392.3,387.1 401.8,381.5 400.4,380.6 388.9,378.9"/>
<polygon points="395.9,342.7 389.8,354.6 400.5,355.7 412.1,351.7 411.0,348.2 397.8,342.9"/>
<polygon points="473.4,384.0 466.8,375.3 447.1,385.4 468.3,385.6"/>
<polygon points="423.4,371.3 424.3,365.2 422.6,364.4 410.1,364.1 407.1,369.0 414.4,371.9"/>
<polygon points="437.7,364.5 442.0,366.7 453.0,368.5 459.3,367.9 451.6,358.5 440.7,357.9"/>
<polygon points="389.7,377.6 399.5,379.1 397.3,370.8 392.6,370.0 387.5,371.5"/>
<polygon points="434.2,375.7 439.2,380.9 451.2,369.5 442.2,368.0"/>
<polygon points="440.6,382.6 441.0,384.0 443.6,385.1 465.9,373.7 466.2,370.4 461.1,369.2 454.1,369.8"/>
<polygon points="432.2,374.5 439.8,367.3 435.8,365.4 426.9,365.6 426.0,371.7"/>
<polygon points="453.9,358.1 462.1,368.0 467.5,369.3 468.5,369.2 474.1,356.4 463.5,351.2"/>
<polygon points="426.0,364.2 435.1,364.0 437.7,358.2 424.0,357.7 424.3,363.5"/>
<polygon points="423.3,356.3 438.5,356.9 433.8,350.9 418.0,353.0"/>
<polygon points="432.1,343.4 423.2,342.6 413.5,348.1 414.7,351.7 415.8,352.0 433.5,349.6 436.1,345.0"/>
<polygon points="431.6,376.0 424.3,372.6 415.5,373.2 415.2,382.4 419.3,384.1 438.3,383.6 438.0,382.6"/>
<polygon points="421.7,363.1 421.4,357.1 415.1,353.2 413.8,352.8 402.6,356.6 409.7,362.8"/>
<polygon points="377.8,381.4 387.1,377.8 385.0,371.8 363.0,371.6 364.1,375.1 375.4,381.1"/>
<polygon points="402.3,379.8 404.2,381.0 412.5,381.8 412.9,372.8 405.5,370.0 399.9,370.8"/>
<polygon points="417.2,390.6 422.3,397.5 433.5,398.2 444.2,390.4 442.6,386.4 439.5,385.0 420.1,385.4"/>
<polygon points="377.7,382.7 375.8,382.5 369.2,395.4 380.3,396.5 392.5,392.3 391.3,388.4"/>
<polygon points="444.1,409.9 449.7,411.3 450.8,411.2 456.8,397.3 445.9,391.7 435.7,399.1"/>
<polygon points="403.9,397.3 419.8,397.9 415.0,391.4 398.6,393.7"/>
<polygon points="404.1,382.4 393.9,388.4 395.1,392.2 396.3,392.5 414.7,389.9 417.5,385.0 413.4,383.3"/>
<polygon points="565.9,190.4 556.3,189.3 549.7,191.5 560.1,194.8 567.2,191.1"/>
<polygon points="535.4,186.8 545.5,190.8 547.5,190.9 554.7,188.6 552.1,184.5 534.0,184.4"/>
<polygon points="551.4,211.1 556.5,210.5 558.6,206.7 551.4,202.0 541.2,201.2 540.3,201.3 540.2,203.7 547.1,210.5"/>
<polygon points="601.2,194.3 598.5,193.4 582.6,193.7 580.9,197.1 586.0,201.8 595.2,202.2 603.0,197.0"/>
<polygon points="544.6,217.8 537.8,220.1 548.5,223.7 555.8,219.7 554.5,219.0"/>
<polygon points="542.3,200.3 551.5,201.1 560.9,198.3 559.5,195.7 547.6,191.9 546.0,191.7"/>
<polygon points="612.6,222.6 616.7,221.5 610.1,215.2 594.7,222.5"/>
<polygon points="565.3,212.7 572.9,212.4 572.9,207.9 571.4,207.4 560.7,207.2 558.8,210.7"/>
<polygon points="588.1,209.0 597.7,210.3 602.9,209.9 595.2,203.1 585.8,202.8 584.2,207.5"/>
<polygon points="550.7,212.0 546.6,211.4 542.5,212.5 545.1,216.9 553.6,217.9"/>
<polygon points="588.4,210.0 582.5,215.5 587.4,219.2 596.2,211.1"/>
<polygon points="598.7,211.3 588.8,220.5 589.3,221.4 591.7,222.3 609.1,214.1 609.0,211.7 604.6,210.8"/>
<polygon points="586.3,209.5 582.7,208.1 575.1,208.2 575.1,212.6 580.7,214.7"/>
<polygon points="610.9,210.8 614.1,201.6 604.6,197.9 597.1,202.8 605.3,210.0 610.0,210.9"/>
<polygon points="574.2,207.3 581.9,207.1 583.4,202.9 571.8,202.5 572.7,206.8"/>
<polygon points="566.1,199.2 570.9,201.6 583.9,202.0 579.3,197.7"/>
<polygon points="561.6,195.6 563.1,198.2 564.1,198.4 578.8,196.7 580.5,193.4 576.9,192.3 569.2,191.6"/>
<polygon points="567.3,220.3 571.0,221.5 587.0,221.2 586.6,220.4 580.4,215.7 573.8,213.3 566.4,213.7"/>
<polygon points="562.5,199.1 553.5,201.8 560.3,206.2 570.4,206.4 569.5,202.2 563.6,199.3"/>
<polygon points="540.4,212.7 521.7,212.6 523.1,215.1 533.4,219.4 535.5,219.6 542.9,217.0"/>
<polygon points="552.9,212.0 556.1,218.4 557.8,219.3 565.0,219.9 564.1,213.5 557.5,211.4"/>
<polygon points="527.8,233.2 534.8,240.5 539.3,241.1 544.6,240.4 546.7,236.4 539.4,231.4 528.9,230.5 527.9,230.6"/>
<polygon points="570.0,226.1 575.1,231.1 584.6,231.6 592.8,226.0 591.0,223.2 588.1,222.1 571.8,222.5"/>
<polygon points="525.0,250.7 536.1,254.6 543.7,250.3 542.4,249.5 532.2,248.3"/>
<polygon points="535.6,220.5 534.0,220.4 530.0,229.6 539.6,230.4 549.3,227.4 547.8,224.6"/>
<polygon points="599.9,245.5 583.9,253.2 602.4,253.4 606.7,252.2"/>
<polygon points="546.9,240.7 553.7,242.9 561.4,242.4 561.5,237.7 560.0,237.2 548.9,236.9"/>
<polygon points="574.9,232.2 573.2,237.2 577.2,238.9 587.1,240.2 592.5,239.8 584.7,232.6"/>
<polygon points="530.0,242.6 532.7,247.3 541.4,248.4 538.5,242.0 534.3,241.4"/>
<polygon points="576.4,249.8 585.6,241.1 577.5,239.9 571.4,245.8"/>
<polygon points="598.8,241.8 594.2,240.8 588.1,241.3 577.8,251.1 578.4,252.1 580.8,253.0 598.9,244.3"/>
<polygon points="571.7,237.9 563.8,238.0 563.8,242.7 569.5,244.9 575.4,239.4"/>
<polygon points="599.8,240.9 600.8,240.8 604.2,231.0 594.4,227.0 586.7,232.2 595.0,239.9"/>
<polygon points="572.5,232.3 560.4,231.9 561.3,236.4 562.9,237.0 570.9,236.8"/>
<polygon points="573.0,231.3 568.2,226.7 554.6,228.4 559.6,230.9"/>
<polygon points="550.1,224.6 551.5,227.3 552.5,227.5 567.8,225.7 569.5,222.1 565.9,221.0 557.9,220.3"/>
<polygon points="555.6,250.9 559.4,252.2 575.9,251.9 575.5,251.0 569.2,246.0 562.4,243.5 554.7,243.9"/>
<polygon points="541.5,231.1 548.5,235.9 559.0,236.1 558.1,231.5 552.1,228.5 550.9,228.2"/>
<polygon points="508.5,242.7 509.9,245.4 520.5,249.9 522.7,250.1 530.4,247.4 527.9,242.8"/>
<polygon points="544.0,248.9 545.7,249.9 553.2,250.5 552.4,243.6 545.6,241.4 540.8,242.0"/>
<polygon points="534.1,268.1 526.5,262.8 515.7,261.8 514.7,261.9 514.5,264.7 521.6,272.5 526.3,273.2 531.8,272.4"/>
<polygon points="563.5,262.5 573.4,263.0 581.9,257.1 580.0,254.0 577.1,252.9 560.2,253.2 558.3,257.2"/>
<polygon points="529.3,282.3 518.8,280.9 511.4,283.5 522.8,287.6 530.8,283.0"/>
<polygon points="536.8,258.5 535.4,255.5 522.8,251.2 521.1,251.0 516.9,260.8 526.7,261.7"/>
<polygon points="596.0,285.1 589.0,277.9 572.3,286.2 591.5,286.4"/>
<polygon points="536.3,268.7 534.2,272.7 541.1,275.1 549.2,274.6 549.4,269.6 547.8,269.0"/>
<polygon points="563.4,263.6 561.4,269.0 565.6,270.8 575.8,272.3 581.4,271.9 573.4,264.1"/>
<polygon points="528.4,281.0 525.5,274.2 521.2,273.6 516.7,274.8 519.3,279.8"/>
<polygon points="559.5,278.2 564.6,282.5 574.2,273.2 565.9,271.9"/>
<polygon points="576.9,273.4 566.1,283.9 566.6,285.0 569.1,286.0 588.0,276.6 587.9,273.9 583.2,272.9"/>
<polygon points="551.6,275.0 557.6,277.3 563.7,271.3 559.9,269.7 551.8,269.9"/>
<polygon points="589.9,272.9 593.6,262.4 583.5,258.1 575.5,263.7 584.0,271.9 589.0,273.0"/>
<polygon points="548.3,263.4 549.2,268.2 550.8,268.8 559.1,268.6 560.8,263.8"/>
<polygon points="542.3,259.6 547.5,262.3 561.3,262.8 556.5,257.8"/>
<polygon points="539.1,258.4 540.2,258.7 556.0,256.7 557.9,252.9 554.1,251.6 545.9,250.9 537.7,255.5"/>
<polygon points="543.0,283.7 546.9,285.1 564.1,284.7 563.6,283.9 557.2,278.5 550.2,275.7 542.3,276.2"/>
<polygon points="538.5,259.4 528.8,262.5 535.9,267.6 546.8,267.9 545.9,262.9 539.7,259.7"/>
<polygon points="517.0,280.0 514.5,275.0 494.4,274.9 495.8,277.8 506.8,282.7 508.9,282.9"/>
<polygon points="531.0,281.6 532.9,282.6 540.5,283.3 539.8,275.9 532.8,273.5 527.9,274.2"/>
<polygon points="512.4,307.7 518.1,306.8 520.5,302.2 512.8,296.4 501.5,295.4 500.5,295.5 500.3,298.5 507.5,306.9"/>
<polygon points="551.1,296.2 561.3,296.7 570.2,290.3 568.3,287.0 565.3,285.9 547.8,286.2 545.7,290.5"/>
<polygon points="504.5,315.9 496.7,318.8 508.5,323.2 516.8,318.2 515.4,317.4"/>
<polygon points="507.3,283.9 502.8,294.4 513.0,295.3 523.5,291.9 522.0,288.7 509.1,284.0"/>
<polygon points="579.8,321.8 584.4,320.4 577.3,312.7 559.8,321.6"/>
<polygon points="527.7,309.7 536.1,309.2 536.3,303.7 534.7,303.1 522.8,302.8 520.6,307.2"/>
<polygon points="563.7,306.7 569.5,306.2 561.3,297.8 551.0,297.3 548.8,303.2 553.1,305.1"/>
<polygon points="505.0,314.8 514.4,316.0 511.5,308.7 507.0,308.0 502.4,309.4"/>
<polygon points="551.9,317.7 562.0,307.6 553.4,306.3 546.7,313.0"/>
<polygon points="553.4,319.2 554.0,320.4 556.5,321.4 576.3,311.3 576.2,308.4 571.3,307.3 564.8,307.8"/>
<polygon points="544.7,312.0 551.1,305.6 547.2,303.9 538.8,304.1 538.6,309.5"/>
<polygon points="563.4,297.4 572.1,306.3 577.3,307.4 578.3,307.3 582.3,296.0 571.8,291.4"/>
<polygon points="548.2,297.6 535.3,297.1 536.2,302.3 537.8,302.9 546.4,302.7"/>
<polygon points="548.8,296.4 543.8,291.1 529.2,293.0 534.4,295.9"/>
<polygon points="533.0,283.7 524.4,288.7 525.9,291.8 527.0,292.0 543.4,289.9 545.4,285.8 541.5,284.5"/>
<polygon points="550.9,319.1 544.3,313.3 537.1,310.4 528.9,310.8 529.5,319.0 533.6,320.4 551.3,320.0"/>
<polygon points="533.6,301.9 532.8,296.6 526.4,293.1 525.2,292.8 515.1,296.2 522.4,301.6"/>
<polygon points="480.7,312.5 491.9,317.8 494.2,318.1 502.6,314.9 500.0,309.6 479.3,309.5"/>
<polygon points="517.1,316.7 519.0,317.7 527.0,318.5 526.3,310.5 519.1,308.0 513.9,308.7"/>
<polygon points="485.2,331.7 485.0,334.9 492.4,343.9 497.4,344.7 503.3,343.8 505.9,338.8 498.0,332.6 486.3,331.5"/>
<polygon points="557.6,326.1 555.7,322.5 552.6,321.3 534.4,321.7 532.2,326.2 537.7,332.3 548.3,332.9"/>
<polygon points="501.8,356.1 500.3,355.2 489.0,353.6 481.0,356.7 493.1,361.4"/>
<polygon points="487.6,330.4 498.2,331.4 509.2,327.7 507.7,324.3 494.3,319.3 492.5,319.1"/>
<polygon points="564.7,350.2 546.5,359.8 567.1,360.0 572.0,358.5"/>
<polygon points="505.9,344.2 513.3,346.9 521.9,346.4 522.3,340.5 520.6,339.8 508.3,339.5"/>
<polygon points="550.6,343.7 556.7,343.1 548.3,334.1 537.6,333.6 535.3,339.9 539.7,341.9"/>
<polygon points="496.4,345.8 491.8,345.1 487.0,346.6 489.6,352.4 499.4,353.8"/>
<polygon points="548.9,344.6 540.0,343.2 532.9,350.5 538.3,355.5"/>
<polygon points="551.8,344.9 539.8,357.1 540.4,358.4 543.0,359.5 563.6,348.7 563.6,345.5 558.6,344.3"/>
<polygon points="537.6,342.5 533.6,340.7 524.9,340.9 524.5,346.7 530.9,349.4"/>
<polygon points="570.1,332.2 559.3,327.2 550.5,333.7 559.4,343.2 564.8,344.5 565.8,344.3"/>
<polygon points="521.3,333.4 522.1,338.9 523.8,339.6 532.7,339.4 534.7,333.8"/>
<polygon points="515.0,328.9 520.5,332.1 535.4,332.6 530.3,326.9"/>
<polygon points="510.2,324.3 511.6,327.7 512.8,327.9 529.8,325.6 531.9,321.2 527.9,319.8 519.1,319.0"/>
<polygon points="537.2,357.1 530.4,350.8 523.0,347.6 514.4,348.1 515.0,356.9 519.2,358.5 537.6,358.1"/>
<polygon points="512.2,329.0 510.9,328.8 500.3,332.3 507.9,338.2 519.5,338.5 518.7,332.8"/>
<polygon points="463.0,346.7 464.4,350.0 476.0,355.7 478.4,355.9 487.2,352.6 484.6,346.8"/>
<polygon points="499.0,345.9 502.2,354.4 504.1,355.6 512.4,356.4 511.8,347.8 504.3,345.1"/>
<polygon points="490.1,378.4 482.0,371.7 469.9,370.4 468.8,370.6 468.5,374.1 476.0,383.8 481.2,384.7 487.4,383.7"/>
<polygon points="517.7,364.7 523.3,371.3 534.3,371.9 544.0,364.6 542.1,360.7 538.9,359.4 520.1,359.8"/>
<polygon points="463.9,397.6 476.4,402.8 485.6,397.0 484.1,396.0 472.4,394.3"/>
<polygon points="493.7,366.3 492.2,362.7 478.4,357.2 476.6,357.0 471.3,369.3 482.3,370.3"/>
<polygon points="558.5,399.5 551.1,390.6 532.0,401.0 553.5,401.2"/>
<polygon points="506.7,386.5 507.2,380.1 505.4,379.4 492.6,379.0 490.0,384.1 497.7,387.0"/>
<polygon points="520.7,379.5 525.2,381.7 536.6,383.5 542.9,383.0 534.3,373.3 523.2,372.7"/>
<polygon points="475.4,385.1 470.4,386.7 473.0,393.0 483.1,394.5 480.2,385.9"/>
<polygon points="518.0,391.0 523.6,396.4 534.8,384.6 525.5,383.1"/>
<polygon points="528.4,400.7 550.0,389.0 550.0,385.6 544.8,384.3 537.7,384.9 525.1,398.1 525.7,399.5"/>
<polygon points="509.4,386.9 515.9,389.8 523.0,382.3 518.9,380.3 509.8,380.5"/>
<polygon points="551.3,384.4 552.4,384.3 556.9,371.1 545.8,365.8 536.6,372.8 545.7,383.1"/>
<polygon points="518.0,379.0 520.2,372.9 506.3,372.4 507.0,378.5 508.8,379.2"/>
<polygon points="505.4,371.1 520.9,371.6 515.7,365.5 499.8,367.7"/>
<polygon points="497.5,366.5 515.2,364.1 517.5,359.3 513.3,357.8 504.2,356.9 494.8,362.6 496.3,366.3"/>
<polygon points="503.6,399.6 522.8,399.1 522.4,398.0 515.5,391.3 507.8,387.8 498.9,388.4 499.3,397.9"/>
<polygon points="503.6,371.9 496.8,367.8 495.5,367.5 484.5,371.3 492.2,377.7 504.3,378.0"/>
<polygon points="467.8,387.0 445.4,386.8 446.9,390.4 458.8,396.6 461.2,396.8 470.4,393.2"/>
<polygon points="488.4,385.1 482.9,385.9 486.0,395.2 488.0,396.4 496.6,397.3 496.2,388.0"/>
<polygon points="519.1,414.1 529.4,406.1 527.5,402.0 524.2,400.5 504.5,401.0 502.0,406.3 507.7,413.5"/>
<polygon points="465.1,412.4 477.0,408.1 475.6,404.1 461.3,398.2 459.3,398.0 453.7,411.2"/>
<polygon points="521.5,415.1 530.9,426.2 536.7,427.7 537.8,427.5 542.7,413.3 531.3,407.5"/>
<polygon points="505.2,413.8 499.9,407.1 483.3,409.5 489.1,413.2"/>
<polygon points="501.8,400.5 497.6,398.8 488.1,397.8 478.2,404.0 479.7,408.0 480.9,408.3 499.4,405.6"/>
<polygon points="636.3,200.7 626.5,199.6 620.0,201.8 630.8,205.2 637.6,201.4"/>
<polygon points="617.7,201.3 624.8,198.8 621.9,194.7 603.6,194.6 605.2,197.0 615.7,201.1"/>
<polygon points="630.2,217.4 622.6,212.6 612.2,211.7 611.3,211.8 611.4,214.3 618.9,221.3 623.4,221.9 628.5,221.3"/>
<polygon points="666.9,212.8 674.4,207.5 672.4,204.7 669.5,203.8 653.5,204.1 652.1,207.6 657.6,212.4"/>
<polygon points="628.5,230.7 627.1,230.0 617.0,228.8 610.3,231.2 621.4,234.8"/>
<polygon points="631.9,208.8 630.2,206.1 617.9,202.2 616.3,202.1 613.2,210.9 622.7,211.7"/>
<polygon points="690.4,232.5 683.1,226.2 668.1,233.6 686.3,233.7"/>
<polygon points="632.4,217.9 630.8,221.5 637.6,223.6 645.2,223.2 644.8,218.7 643.3,218.1"/>
<polygon points="675.4,220.7 667.1,213.8 657.6,213.3 656.2,218.2 660.3,219.8 670.1,221.1"/>
<polygon points="622.7,222.8 618.5,222.2 614.5,223.4 617.4,227.9 626.1,228.9"/>
<polygon points="660.7,220.8 655.2,226.4 660.5,230.3 668.7,221.9"/>
<polygon points="681.7,222.6 677.1,221.6 671.2,222.1 662.0,231.5 662.6,232.5 665.0,233.4 682.0,225.0"/>
<polygon points="658.5,220.3 654.8,218.8 647.1,219.0 647.5,223.5 653.3,225.6"/>
<polygon points="683.5,221.6 686.0,212.2 676.1,208.4 669.0,213.4 677.8,220.8 682.6,221.8"/>
<polygon points="643.2,213.1 644.6,217.5 646.1,218.0 653.9,217.8 655.1,213.5"/>
<polygon points="650.4,208.1 637.2,209.7 642.3,212.2 655.5,212.6"/>
<polygon points="649.9,207.2 651.3,203.7 647.6,202.6 639.7,202.0 632.4,206.1 634.1,208.7 635.1,208.9"/>
<polygon points="653.1,226.6 646.2,224.2 638.7,224.6 640.2,231.3 644.0,232.6 660.2,232.2 659.7,231.5"/>
<polygon points="633.5,209.6 624.7,212.4 631.9,216.9 642.2,217.2 640.9,212.8 634.7,209.8"/>
<polygon points="607.9,230.6 615.3,228.0 612.3,223.6 593.4,223.4 595.0,226.0 605.8,230.4"/>
<polygon points="629.6,222.2 624.9,222.8 628.7,229.4 630.5,230.3 637.8,230.9 636.4,224.3"/>
<polygon points="620.7,247.8 612.9,242.7 602.1,241.8 601.2,241.9 601.3,244.6 608.9,252.0 613.6,252.7 618.9,252.0"/>
<polygon points="649.0,242.4 658.7,242.9 666.5,237.2 664.4,234.3 661.5,233.2 644.9,233.6 643.4,237.3"/>
<polygon points="606.9,260.0 599.9,262.6 611.4,266.5 618.8,262.1 617.4,261.3"/>
<polygon points="603.2,240.8 612.9,241.7 622.5,238.6 620.8,235.8 608.1,231.6 606.5,231.4"/>
<polygon points="675.3,257.2 659.7,265.1 678.5,265.3 682.8,264.0"/>
<polygon points="635.8,249.2 634.2,248.6 623.0,248.4 621.3,252.2 628.3,254.5 636.1,254.0"/>
<polygon points="651.8,250.4 661.9,251.8 667.4,251.4 658.8,243.9 648.9,243.5 647.6,248.7"/>
<polygon points="608.6,253.0 604.3,254.2 607.4,259.0 616.3,260.2 612.8,253.6"/>
<polygon points="652.2,251.5 646.5,257.5 651.9,261.6 660.4,252.6"/>
<polygon points="653.4,262.9 654.0,264.0 656.5,264.9 674.2,256.0 673.9,253.3 669.2,252.4 663.0,252.8"/>
<polygon points="638.2,249.5 638.5,254.4 644.5,256.6 649.9,250.9 646.1,249.3"/>
<polygon points="675.8,252.4 678.5,242.3 668.2,238.2 660.8,243.6 669.8,251.4 674.9,252.5"/>
<polygon points="637.1,248.5 645.2,248.3 646.4,243.7 634.2,243.3 635.5,247.9"/>
<polygon points="646.9,242.7 641.7,237.9 628.0,239.6 633.3,242.2"/>
<polygon points="641.1,236.9 642.6,233.2 638.8,232.0 630.7,231.3 623.1,235.7 624.8,238.6 625.9,238.8"/>
<polygon points="637.2,255.1 629.4,255.5 630.8,262.7 634.8,264.1 651.5,263.7 651.1,262.9 644.3,257.7"/>
<polygon points="633.1,247.6 631.8,242.9 625.4,239.7 624.2,239.5 615.0,242.4 622.4,247.3"/>
<polygon points="602.1,254.4 582.5,254.3 584.2,257.0 595.3,261.7 597.5,261.9 605.1,259.2"/>
<polygon points="627.0,255.2 619.9,253.0 615.2,253.6 618.9,260.7 620.8,261.7 628.4,262.3"/>
<polygon points="603.0,285.6 608.5,284.8 610.5,280.4 602.4,274.9 591.3,273.9 590.3,274.0 590.4,276.9 598.3,284.9"/>
<polygon points="635.7,265.1 634.1,269.2 639.9,274.6 649.9,275.1 658.0,269.1 655.9,265.9 652.8,264.8"/>
<polygon points="608.4,295.7 606.9,294.9 596.1,293.5 588.8,296.2 600.6,300.4"/>
<polygon points="597.7,263.0 595.9,262.9 592.5,272.9 602.5,273.8 612.5,270.5 610.8,267.5"/>
<polygon points="674.6,297.8 667.0,290.5 650.7,299.0 670.2,299.1"/>
<polygon points="626.1,281.9 624.5,281.3 612.8,281.0 611.0,285.1 618.2,287.5 626.4,287.1"/>
<polygon points="642.7,283.2 653.1,284.7 658.8,284.2 650.0,276.2 639.7,275.8 638.3,281.3"/>
<polygon points="596.5,292.4 605.8,293.6 602.3,286.6 597.9,286.0 593.5,287.3"/>
<polygon points="643.1,284.3 637.1,290.8 642.6,295.2 651.6,285.6"/>
<polygon points="644.2,296.6 644.9,297.8 647.4,298.7 665.8,289.1 665.5,286.3 660.7,285.3 654.3,285.8"/>
<polygon points="640.7,283.7 636.8,282.0 628.6,282.2 628.8,287.4 635.1,289.8"/>
<polygon points="666.5,285.4 667.5,285.3 670.4,274.5 659.7,270.1 652.1,275.9 661.4,284.3"/>
<polygon points="635.9,280.9 637.2,276.0 624.5,275.5 625.8,280.5 627.5,281.1"/>
<polygon points="623.6,274.4 637.7,274.9 632.3,269.8 618.2,271.6"/>
<polygon points="613.1,267.5 614.8,270.5 615.9,270.7 631.8,268.7 633.3,264.8 629.4,263.5 621.0,262.7"/>
<polygon points="634.8,291.0 627.5,288.2 619.5,288.7 620.8,296.4 624.9,297.8 642.3,297.5 641.8,296.6"/>
<polygon points="604.6,274.6 612.3,279.9 623.3,280.1 622.0,275.1 615.5,271.7 614.2,271.5"/>
<polygon points="594.2,292.6 591.2,287.5 570.9,287.3 572.5,290.3 584.0,295.4 586.3,295.6"/>
<polygon points="618.3,296.0 617.0,288.4 609.7,285.9 604.7,286.6 608.5,294.2 610.5,295.3"/>
<polygon points="597.5,320.2 599.5,315.4 591.3,309.5 579.8,308.4 578.7,308.6 578.8,311.6 586.8,320.2 591.7,321.0"/>
<polygon points="630.1,309.2 640.4,309.7 648.9,303.2 646.7,299.8 643.6,298.6 625.9,299.0 624.1,303.3"/>
<polygon points="576.8,332.4 589.1,336.9 597.2,331.9 595.6,331.0 584.4,329.5"/>
<polygon points="600.0,301.5 586.5,296.7 584.7,296.5 580.9,307.4 591.4,308.3 601.7,304.8"/>
<polygon points="658.0,326.2 641.1,335.4 661.3,335.5 665.8,334.1"/>
<polygon points="600.0,320.5 607.5,323.1 615.9,322.6 615.7,317.0 614.0,316.3 602.0,316.0"/>
<polygon points="629.9,310.4 628.4,316.4 632.9,318.3 643.7,320.0 649.6,319.5 640.5,310.9"/>
<polygon points="584.9,328.3 594.5,329.6 591.0,322.1 586.4,321.4 581.8,322.8"/>
<polygon points="633.3,319.6 627.0,326.5 632.7,331.3 642.1,320.9"/>
<polygon points="644.9,321.2 634.3,332.8 635.0,334.1 637.7,335.1 656.8,324.8 656.6,321.8 651.5,320.6"/>
<polygon points="630.9,318.9 626.8,317.2 618.3,317.3 618.5,322.9 624.9,325.5"/>
<polygon points="642.7,310.5 652.2,319.6 657.6,320.8 658.6,320.6 661.7,309.0 650.7,304.3"/>
<polygon points="627.3,310.6 614.1,310.2 615.4,315.5 617.2,316.1 625.8,315.9"/>
<polygon points="627.8,309.5 622.3,304.0 607.6,305.9 613.2,308.9"/>
<polygon points="621.7,302.8 623.4,298.6 619.4,297.2 610.7,296.4 602.4,301.5 604.2,304.7 605.3,305.0"/>
<polygon points="608.7,324.3 610.1,332.6 614.3,334.1 632.3,333.7 631.8,332.8 624.6,326.8 617.0,323.8"/>
<polygon points="601.4,314.8 612.9,315.1 611.6,309.7 604.8,306.0 603.5,305.8 593.5,309.2"/>
<polygon points="574.2,331.7 582.5,328.5 579.4,323.0 558.4,322.9 560.1,326.0 571.9,331.5"/>
<polygon points="598.6,321.3 593.5,322.1 597.3,330.3 599.3,331.4 607.5,332.1 606.2,324.0"/>
<polygon points="567.3,345.5 566.2,345.7 566.2,349.0 574.5,358.3 579.6,359.1 585.5,358.2 587.7,353.1 579.2,346.7"/>
<polygon points="639.1,339.9 636.9,336.3 633.7,335.0 615.3,335.4 613.4,340.1 619.5,346.4 630.3,347.0"/>
<polygon points="564.0,371.4 576.6,376.3 585.1,370.8 583.5,369.9 571.9,368.2"/>
<polygon points="574.4,332.9 572.6,332.8 568.5,344.4 579.4,345.4 590.2,341.6 588.4,338.1"/>
<polygon points="656.4,373.2 648.3,364.7 630.6,374.6 651.6,374.8"/>
<polygon points="604.5,354.7 602.8,354.1 590.2,353.7 588.2,358.5 595.9,361.3 604.7,360.8"/>
<polygon points="619.3,347.7 617.6,354.1 622.3,356.2 633.5,358.0 639.7,357.5 630.4,348.2"/>
<polygon points="574.0,359.5 569.2,361.0 572.4,367.0 582.4,368.4 578.8,360.3"/>
<polygon points="622.7,357.6 616.1,365.1 622.0,370.2 631.9,359.0"/>
<polygon points="646.9,359.9 641.6,358.7 634.8,359.3 623.7,371.9 624.3,373.2 627.1,374.3 647.1,363.2"/>
<polygon points="620.2,356.9 616.0,354.9 607.2,355.1 607.3,361.2 614.0,363.9"/>
<polygon points="641.0,341.1 632.6,347.8 642.4,357.6 648.0,358.9 649.0,358.7 652.3,346.2"/>
<polygon points="616.6,347.9 603.0,347.4 604.3,353.2 606.0,353.9 615.0,353.6"/>
<polygon points="617.2,346.7 611.5,340.8 596.2,342.9 602.0,346.1"/>
<polygon points="599.5,332.6 590.9,338.1 592.7,341.5 593.8,341.8 610.9,339.5 612.7,334.9 608.5,333.5"/>
<polygon points="613.7,365.3 605.8,362.1 597.2,362.6 598.5,371.6 602.9,373.3 621.5,372.8 621.0,371.8"/>
<polygon points="581.6,346.4 589.7,352.4 601.6,352.7 600.3,346.9 593.3,343.0 592.0,342.7"/>
<polygon points="544.9,361.1 546.6,364.5 558.8,370.4 561.2,370.6 569.9,367.2 566.8,361.3"/>
<polygon points="585.3,369.1 587.3,370.3 595.8,371.1 594.5,362.3 586.7,359.5 581.3,360.3"/>
<polygon points="561.1,399.3 566.5,400.2 572.7,399.3 575.0,393.7 566.2,386.8 553.9,385.6 552.7,385.7 552.7,389.3"/>
<polygon points="608.1,386.5 619.3,387.1 628.6,379.5 626.3,375.6 623.0,374.2 603.9,374.6 601.9,379.7"/>
<polygon points="572.0,412.9 570.4,411.9 558.3,410.1 550.0,413.6 563.1,418.9"/>
<polygon points="559.5,371.8 555.2,384.3 566.4,385.5 577.7,381.3 575.9,377.6 561.4,372.0"/>
<polygon points="637.9,406.3 619.4,417.0 641.2,417.2 646.2,415.5"/>
<polygon points="592.4,395.5 590.6,394.8 577.6,394.4 575.4,399.6 583.4,402.6 592.5,402.1"/>
<polygon points="606.1,394.9 610.9,397.1 622.6,399.1 628.9,398.5 619.4,388.5 608.1,387.8"/>
<polygon points="560.6,400.7 555.7,402.3 558.9,408.8 569.2,410.3 565.6,401.5"/>
<polygon points="611.3,398.6 604.4,406.7 610.4,412.3 620.8,400.2"/>
<polygon points="636.7,404.6 636.4,401.1 631.0,399.8 623.8,400.4 612.2,414.1 612.8,415.5 615.7,416.7"/>
<polygon points="595.2,396.0 595.3,402.5 602.1,405.5 608.7,397.8 604.4,395.7"/>
<polygon points="637.6,400.0 638.7,399.8 642.2,386.3 630.5,380.8 621.7,388.0 631.8,398.6"/>
<polygon points="594.0,394.6 603.4,394.3 605.0,388.1 590.9,387.6 592.2,393.8"/>
<polygon points="589.9,386.2 605.7,386.8 599.9,380.4 584.0,382.7"/>
<polygon points="580.3,381.3 581.5,381.6 599.3,379.0 601.2,374.1 596.9,372.5 587.5,371.6 578.5,377.5"/>
<polygon points="590.5,415.6 609.9,415.1 609.4,414.0 601.8,407.0 593.7,403.5 584.7,404.0 585.9,413.8"/>
<polygon points="589.4,393.4 588.1,387.0 581.0,382.8 579.6,382.5 568.7,386.5 577.1,393.0"/>
<polygon points="530.4,402.4 532.1,406.1 544.7,412.4 547.2,412.7 556.3,409.0 553.1,402.6"/>
<polygon points="583.1,413.2 581.9,403.7 573.8,400.6 568.3,401.5 572.2,411.0 574.4,412.3"/>
<polygon points="591.5,417.0 589.4,422.5 595.8,429.9 607.4,430.6 617.2,422.3 614.9,418.1 611.4,416.5"/>
<polygon points="562.3,420.2 547.4,414.2 545.4,414.0 540.7,427.6 552.4,428.8 564.2,424.3"/>
<polygon points="619.2,423.7 609.9,431.5 620.3,443.0 626.3,444.5 627.4,444.3 631.3,429.7"/>
<polygon points="587.3,423.3 570.7,425.8 576.8,429.6 593.2,430.2"/>
<polygon points="588.7,416.5 584.3,414.8 574.5,413.8 565.1,420.2 566.9,424.2 568.1,424.5 586.7,421.8"/>
<polygon points="692.0,212.4 703.2,215.9 709.8,212.0 708.4,211.3 698.4,210.1"/>
<polygon points="687.6,211.7 689.6,211.9 696.6,209.4 693.3,205.1 674.8,205.0 676.6,207.5"/>
<polygon points="695.5,223.5 685.0,222.6 684.0,222.7 684.4,225.2 692.5,232.4 697.1,233.0 702.2,232.3 703.7,228.4"/>
<polygon points="725.0,218.3 730.9,223.2 740.4,223.7 747.5,218.2 745.3,215.4 742.3,214.4 726.1,214.7"/>
<polygon points="701.6,241.3 691.3,240.1 684.6,242.5 696.2,246.2 703.1,242.0"/>
<polygon points="704.7,219.5 702.7,216.8 689.9,212.8 688.3,212.7 685.9,221.7 695.5,222.5"/>
<polygon points="757.9,237.4 743.4,244.9 761.8,245.1 765.8,243.9"/>
<polygon points="705.9,228.9 704.6,232.6 711.6,234.7 719.3,234.3 718.6,229.7 717.0,229.1"/>
<polygon points="730.0,229.2 734.3,230.8 744.4,232.2 749.7,231.8 740.6,224.6 731.0,224.2"/>
<polygon points="696.5,233.9 692.2,233.3 688.2,234.5 691.6,239.1 700.5,240.2"/>
<polygon points="734.8,231.9 729.7,237.6 735.4,241.6 743.0,233.0"/>
<polygon points="737.7,243.9 740.3,244.7 756.8,236.2 756.2,233.7 751.5,232.7 745.6,233.2 737.0,242.8"/>
<polygon points="721.6,234.6 727.7,236.8 732.6,231.3 728.7,229.8 720.9,230.0"/>
<polygon points="749.3,219.1 742.5,224.3 752.1,231.8 757.1,232.8 758.0,232.7 759.7,223.1"/>
<polygon points="716.5,224.0 718.2,228.5 719.8,229.0 727.7,228.8 728.5,224.4"/>
<polygon points="710.1,220.5 715.5,223.0 728.9,223.4 723.3,218.9"/>
<polygon points="706.9,219.5 707.9,219.7 722.7,217.9 723.8,214.4 720.0,213.2 712.0,212.6 704.9,216.8"/>
<polygon points="712.9,235.7 714.9,242.7 718.9,243.9 735.2,243.6 734.7,242.8 727.6,237.8 720.4,235.3"/>
<polygon points="706.4,220.4 697.6,223.2 705.3,227.9 715.8,228.1 714.1,223.6 707.6,220.6"/>
<polygon points="686.1,234.7 666.9,234.6 668.7,237.2 680.0,241.7 682.2,241.9 689.4,239.2"/>
<polygon points="703.4,233.3 698.8,233.9 703.1,240.7 705.0,241.6 712.5,242.3 710.5,235.5"/>
<polygon points="689.7,264.6 695.1,263.8 696.6,259.6 688.2,254.3 677.3,253.4 676.3,253.5 676.6,256.2 685.0,263.9"/>
<polygon points="724.8,254.1 734.6,254.5 742.0,248.7 739.7,245.7 736.6,244.6 719.9,245.0 718.7,248.8"/>
<polygon points="694.3,273.4 683.6,272.1 676.7,274.7 688.7,278.7 695.9,274.2"/>
<polygon points="678.3,252.4 688.2,253.3 697.7,250.1 695.7,247.2 682.5,242.9 680.8,242.8"/>
<polygon points="752.7,269.2 737.5,277.3 756.6,277.5 760.8,276.2"/>
<polygon points="697.5,264.1 704.8,266.4 712.7,266.0 712.0,261.0 710.3,260.4 698.9,260.1"/>
<polygon points="724.9,255.1 723.8,260.5 728.3,262.2 738.6,263.7 744.1,263.2 734.9,255.6"/>
<polygon points="693.2,272.2 689.1,265.5 684.7,264.9 680.5,266.1 684.0,271.1"/>
<polygon points="728.8,263.3 723.5,269.5 729.3,273.7 737.2,264.5"/>
<polygon points="751.5,267.9 750.9,265.2 746.1,264.2 739.9,264.7 731.0,275.1 731.7,276.2 734.3,277.1"/>
<polygon points="726.4,262.7 722.4,261.1 714.4,261.3 715.1,266.3 721.4,268.5"/>
<polygon points="752.8,264.2 754.6,253.9 743.8,249.7 736.8,255.2 746.7,263.3 751.8,264.4"/>
<polygon points="722.3,255.3 709.9,254.9 711.6,259.7 713.3,260.2 721.4,260.1"/>
<polygon points="722.7,254.3 717.0,249.4 703.3,251.2 708.8,253.8"/>
<polygon points="717.5,244.6 713.6,243.4 705.3,242.7 698.0,247.2 699.9,250.1 701.0,250.3 716.3,248.3"/>
<polygon points="708.1,274.9 712.2,276.2 729.1,275.9 728.6,275.0 721.3,269.7 713.9,267.0 706.1,267.5"/>
<polygon points="690.3,254.0 698.3,259.0 709.1,259.3 707.4,254.5 700.7,251.2 699.4,251.0"/>
<polygon points="678.3,266.3 658.4,266.2 660.3,269.0 672.0,273.9 674.2,274.1 681.7,271.2"/>
<polygon points="695.9,272.8 697.8,273.8 705.6,274.5 703.6,267.2 696.2,264.9 691.5,265.5"/>
<polygon points="681.8,298.4 687.4,297.6 688.9,293.0 680.3,287.4 669.0,286.3 668.0,286.5 668.3,289.4 676.9,297.6"/>
<polygon points="728.4,287.6 736.1,281.4 733.7,278.1 730.5,277.0 713.3,277.3 711.9,281.5 718.2,287.1"/>
<polygon points="680.6,313.6 688.1,308.7 686.5,307.9 675.4,306.5 668.3,309.3"/>
<polygon points="680.3,286.3 690.2,282.9 688.2,279.8 674.5,275.2 672.8,275.0 670.1,285.3"/>
<polygon points="751.1,312.2 755.4,310.9 747.0,303.3 731.3,312.1"/>
<polygon points="689.9,297.9 697.4,300.3 705.6,299.9 704.9,294.5 703.2,293.9 691.4,293.6"/>
<polygon points="721.8,295.8 732.5,297.4 738.2,296.9 728.6,288.7 718.2,288.3 717.2,294.0"/>
<polygon points="681.2,299.4 676.6,298.7 672.3,300.0 675.8,305.4 685.3,306.6"/>
<polygon points="722.3,297.0 716.7,303.6 722.8,308.2 731.0,298.3"/>
<polygon points="727.9,311.8 745.8,302.0 745.2,299.1 740.2,298.0 733.8,298.5 724.5,309.7 725.2,310.8"/>
<polygon points="719.9,296.4 715.7,294.7 707.4,294.9 708.1,300.2 714.6,302.7"/>
<polygon points="740.8,297.0 746.2,298.2 747.1,298.0 749.1,286.9 738.0,282.4 730.7,288.3"/>
<polygon points="714.7,293.5 715.6,288.5 702.8,288.0 704.5,293.1 706.2,293.7"/>
<polygon points="716.1,287.3 710.2,282.1 696.0,284.0 701.7,286.9"/>
<polygon points="698.1,274.9 690.5,279.7 692.5,282.8 693.7,283.0 709.5,281.0 710.8,277.0 706.7,275.6"/>
<polygon points="705.0,310.9 722.6,310.5 722.0,309.6 714.5,303.9 706.8,301.0 698.7,301.5 700.8,309.5"/>
<polygon points="701.9,292.7 700.2,287.6 693.3,284.1 692.0,283.8 682.5,287.1 690.7,292.5"/>
<polygon points="663.4,308.4 665.7,308.6 673.5,305.5 670.0,300.3 649.4,300.1 651.3,303.2"/>
<polygon points="683.6,299.4 688.1,307.2 690.2,308.3 698.2,309.0 696.2,301.2 688.6,298.7"/>
<polygon points="659.4,325.1 668.3,333.9 673.3,334.7 679.1,333.8 680.8,329.0 671.9,322.9 660.1,321.8 659.1,321.9"/>
<polygon points="721.8,323.1 729.8,316.4 727.3,312.9 724.0,311.7 706.1,312.1 704.7,316.6 711.2,322.6"/>
<polygon points="666.6,343.4 659.2,346.4 672.0,351.1 679.7,345.9 678.1,345.0"/>
<polygon points="661.2,320.7 671.9,321.7 682.1,318.0 680.1,314.7 666.0,309.8 664.1,309.6"/>
<polygon points="749.6,348.2 740.9,340.1 724.5,349.5 745.1,349.6"/>
<polygon points="681.7,334.2 689.5,336.8 698.0,336.3 697.3,330.6 695.5,329.9 683.3,329.6"/>
<polygon points="722.0,324.3 711.2,323.9 710.1,330.0 714.8,332.0 725.9,333.7 731.9,333.2"/>
<polygon points="667.9,335.1 663.4,336.5 667.0,342.2 676.9,343.6 672.6,335.8"/>
<polygon points="724.4,334.6 715.3,333.3 709.5,340.4 715.7,345.3"/>
<polygon points="727.2,334.9 717.5,346.9 718.3,348.1 721.1,349.2 739.7,338.6 739.1,335.5 733.9,334.3"/>
<polygon points="712.8,332.6 708.5,330.8 699.9,330.9 700.6,336.7 707.3,339.3"/>
<polygon points="724.1,323.9 734.5,333.2 740.1,334.5 741.1,334.3 743.2,322.4 731.7,317.5"/>
<polygon points="707.5,329.5 708.5,324.0 695.1,323.6 696.9,329.0 698.7,329.7"/>
<polygon points="708.9,322.9 702.9,317.2 688.2,319.2 694.1,322.3"/>
<polygon points="682.5,314.6 684.6,318.0 685.7,318.2 702.2,316.0 703.6,311.7 699.3,310.3 690.5,309.4"/>
<polygon points="690.8,338.1 692.9,346.7 697.3,348.2 715.5,347.8 714.9,346.8 707.2,340.7 699.2,337.6"/>
<polygon points="674.2,322.6 682.6,328.3 694.3,328.6 692.5,323.1 685.4,319.3 684.0,319.1"/>
<polygon points="639.7,336.6 641.6,339.9 654.1,345.5 656.5,345.7 664.6,342.4 661.0,336.8"/>
<polygon points="679.8,344.2 681.9,345.4 690.2,346.2 688.2,337.8 680.3,335.1 675.2,335.8"/>
<polygon points="650.6,359.9 649.5,360.1 649.8,363.5 658.9,373.0 664.2,373.9 670.2,373.0 671.9,367.7 662.8,361.1"/>
<polygon points="703.6,360.8 714.6,361.4 723.0,354.2 720.4,350.4 717.0,349.1 698.4,349.5 696.9,354.3"/>
<polygon points="657.1,383.3 649.4,386.6 662.6,391.6 670.7,385.9 669.0,385.0"/>
<polygon points="654.9,346.8 651.8,358.8 662.8,359.8 673.5,355.9 671.4,352.3 656.8,347.0"/>
<polygon points="717.3,389.8 738.6,390.0 743.3,388.4 734.4,379.7"/>
<polygon points="689.8,375.6 689.1,369.4 687.3,368.7 674.5,368.4 672.9,373.3 680.9,376.2"/>
<polygon points="703.7,362.1 702.4,368.8 707.3,370.9 718.8,372.8 725.0,372.2 714.8,362.7"/>
<polygon points="658.6,374.3 653.8,375.8 657.6,382.0 667.8,383.5 663.4,375.1"/>
<polygon points="707.8,372.3 701.7,380.0 708.1,385.3 717.2,373.8"/>
<polygon points="727.1,373.5 720.2,374.1 710.0,387.0 710.8,388.4 713.7,389.6 733.1,378.1 732.5,374.7"/>
<polygon points="700.8,369.6 691.8,369.8 692.5,376.0 699.5,378.9 705.2,371.6"/>
<polygon points="727.8,372.3 733.5,373.6 734.6,373.5 736.9,360.6 725.0,355.4 717.0,362.3"/>
<polygon points="700.8,362.4 686.9,361.9 688.7,367.8 690.6,368.5 699.7,368.3"/>
<polygon points="701.3,361.1 695.0,355.0 679.7,357.2 685.8,360.5"/>
<polygon points="694.3,353.7 695.8,349.1 691.4,347.5 682.2,346.6 673.9,352.2 676.0,355.8 677.2,356.1"/>
<polygon points="691.1,377.0 682.3,377.5 684.4,386.8 689.0,388.5 707.9,388.0 707.3,387.0 699.3,380.3"/>
<polygon points="676.8,357.3 675.4,357.0 665.2,360.8 673.9,367.0 686.0,367.3 684.2,361.3"/>
<polygon points="651.4,376.1 629.2,375.9 631.2,379.5 644.1,385.5 646.5,385.8 655.0,382.2"/>
<polygon points="666.1,375.1 670.8,384.2 673.0,385.4 681.6,386.2 679.6,377.2 671.4,374.3"/>
<polygon points="639.4,405.0 648.8,415.3 654.3,416.2 660.5,415.2 662.4,409.5 653.0,402.4 640.3,401.1 639.2,401.3"/>
<polygon points="688.5,395.1 695.4,402.1 706.8,402.7 715.6,394.9 713.0,390.8 709.5,389.4 690.1,389.9"/>
<polygon points="646.8,426.4 638.7,430.0 652.5,435.4 661.0,429.3 659.2,428.3"/>
<polygon points="641.5,399.9 653.0,401.0 664.1,396.8 662.0,392.9 646.8,387.1 644.9,386.9"/>
<polygon points="731.6,433.7 736.5,432.0 727.3,422.5 709.4,433.5"/>
<polygon points="665.1,410.3 663.3,415.6 671.7,418.7 680.9,418.1 680.3,411.4 678.4,410.6"/>
<polygon points="694.1,410.7 699.2,413.1 711.2,415.0 717.6,414.5 707.0,404.1 695.5,403.5"/>
<polygon points="648.4,416.7 643.5,418.4 647.3,425.0 657.9,426.6 653.5,417.5"/>
<polygon points="693.3,422.9 699.9,428.6 709.5,416.2 699.7,414.6"/>
<polygon points="705.7,433.2 725.9,420.8 725.4,417.2 719.7,415.8 712.6,416.5 701.9,430.5 702.6,432.0"/>
<polygon points="683.1,411.8 683.7,418.6 691.0,421.6 697.0,413.8 692.4,411.6"/>
<polygon points="720.5,414.5 726.5,416.0 727.5,415.8 730.0,401.9 717.7,396.2 709.3,403.7"/>
<polygon points="681.8,410.4 691.3,410.2 692.5,403.8 678.1,403.2 679.9,409.6"/>
<polygon points="676.9,401.8 693.0,402.4 686.6,395.9 670.6,398.2"/>
<polygon points="673.3,386.8 664.6,392.8 666.8,396.7 668.0,397.0 685.8,394.4 687.4,389.4 682.8,387.7"/>
<polygon points="675.2,430.2 680.0,432.0 699.7,431.6 699.1,430.4 690.7,423.2 682.2,419.6 673.1,420.2"/>
<polygon points="655.4,402.1 664.5,408.8 677.0,409.2 675.2,402.7 667.6,398.3 666.1,398.0"/>
<polygon points="617.8,418.5 619.9,422.3 633.2,428.8 635.8,429.1 644.7,425.2 640.9,418.7"/>
<polygon points="656.2,417.6 661.1,427.4 663.3,428.7 672.3,429.6 670.3,419.8 661.8,416.7"/>
<polygon points="681.1,433.5 679.4,439.2 686.6,446.8 698.4,447.5 707.6,439.0 704.9,434.6 701.3,433.1"/>
<polygon points="636.1,430.6 634.0,430.4 630.4,444.4 642.4,445.7 654.0,441.1 651.8,436.8"/>
<polygon points="722.6,446.6 709.8,440.4 701.0,448.5 712.6,460.3 718.8,461.9 719.9,461.7"/>
<polygon points="677.4,440.1 660.7,442.6 667.3,446.5 684.0,447.2"/>
<polygon points="673.6,431.2 663.6,430.2 654.5,436.8 656.7,441.0 658.0,441.3 676.6,438.5 678.3,433.0"/>
<polygon points="765.8,223.3 777.5,226.9 783.8,222.8 782.3,222.1 772.1,220.9"/>
<polygon points="747.7,215.7 749.8,218.2 761.2,222.5 763.3,222.7 770.2,220.1 766.5,215.8"/>
<polygon points="758.6,233.8 759.1,236.4 768.0,243.8 772.7,244.4 777.8,243.7 778.9,239.6 770.3,234.6 759.5,233.7"/>
<polygon points="760.9,254.1 772.9,258.0 779.5,253.6 778.0,252.9 767.4,251.6"/>
<polygon points="763.7,223.7 762.0,223.5 760.4,232.8 770.2,233.6 779.2,230.6 777.0,227.8"/>
<polygon points="756.2,253.3 758.3,253.5 765.4,250.8 761.7,246.1 742.2,246.0 744.3,248.7"/>
<polygon points="753.9,268.2 763.1,276.0 767.9,276.7 773.2,276.0 774.4,271.6 765.5,266.2 754.3,265.2 753.3,265.4"/>
<polygon points="773.3,285.9 762.4,284.5 755.6,287.2 768.1,291.3 774.9,286.6"/>
<polygon points="755.3,264.3 765.4,265.2 774.7,261.9 772.5,258.9 758.7,254.5 757.0,254.4"/>
<polygon points="736.3,278.4 738.5,281.3 750.7,286.3 753.0,286.5 760.3,283.6 756.5,278.6"/>
<polygon points="762.8,311.4 768.3,310.6 769.5,306.0 760.3,300.2 748.7,299.1 747.7,299.2 748.3,302.3 757.8,310.7"/>
<polygon points="770.0,322.1 768.3,321.3 757.0,319.8 750.0,322.6 762.8,327.1"/>
<polygon points="749.7,298.1 760.2,299.0 769.9,295.5 767.6,292.3 753.4,287.6 751.6,287.5"/>
<polygon points="730.0,313.3 732.2,316.4 744.9,321.7 747.2,321.9 754.9,318.8 750.9,313.4"/>
<polygon points="754.7,336.6 742.8,335.5 741.7,335.7 742.3,338.9 752.0,348.0 757.2,348.8 763.0,347.9 764.3,342.9"/>
<polygon points="743.9,360.9 757.2,365.7 764.7,360.3 762.9,359.4 751.2,357.8"/>
<polygon points="764.7,331.7 762.4,328.2 747.6,323.2 745.8,323.0 743.8,334.4 754.7,335.4"/>
<polygon points="723.2,350.8 725.5,354.1 738.6,359.9 741.0,360.1 749.0,356.7 744.9,350.9"/>
<polygon points="735.2,374.9 735.8,378.4 745.9,388.2 751.3,389.1 757.2,388.2 758.6,382.7 748.8,376.0 736.3,374.8"/>
<polygon points="744.9,398.8 737.3,402.2 751.2,407.3 758.9,401.5 757.1,400.5"/>
<polygon points="739.5,361.2 737.4,373.5 748.7,374.7 759.1,370.6 756.7,366.9 741.5,361.4"/>
<polygon points="715.9,391.2 718.3,394.9 731.8,401.1 734.3,401.3 742.7,397.7 738.4,391.4"/>
<polygon points="739.2,431.8 744.8,432.7 751.0,431.7 752.5,425.8 742.3,418.5 729.3,417.2 728.2,417.4 728.8,421.2"/>
<polygon points="730.1,446.9 744.6,452.5 752.7,446.2 750.8,445.1 738.1,443.2"/>
<polygon points="734.8,402.8 732.8,402.6 730.4,415.9 742.2,417.1 753.1,412.7 750.6,408.7"/>
<polygon points="724.5,445.7 727.1,446.0 735.8,442.0 731.4,435.2 708.0,435.0 710.4,439.0"/>
<polygon points="725.4,447.3 722.9,461.8 735.2,463.1 746.6,458.3 744.0,454.0 727.5,447.5"/>
</g></g></g></svg>
<svg width="1320" height="670" viewBox="0 0 1320 670">
<polygon points="325.7,159.3 346.0,162.0 217.2,352.7 192.2,348.3" fill="#dbdbdb" stroke="#5a5a5a" stroke-width="0.7"/>
<line x1="346.0" y1="162.0" x2="192.2" y2="348.3" stroke="#444" stroke-width="0.8"/>
<polygon points="217.2,352.7 763.2,223.4 726.9,447.1" fill="#9a9082" fill-opacity="0.42"/>
<polyline points="346.0,162.0 763.2,223.4" fill="none" stroke="#e9b777" stroke-width="1"/>
<polygon points="217.2,352.7 763.2,223.4 726.9,447.1" fill="none" stroke="#ffffff" stroke-width="1.25" stroke-linejoin="round"/>
<g stroke-linejoin="round">
<polygon points="311.5,229.3 338.6,234.0 327.2,249.0 301.0,245.3" fill="#d9cf16"/>
<polygon points="301.0,245.3 327.2,249.0 329.2,259.7 301.5,254.2" fill="#cbc018"/>
<polygon points="327.2,249.0 338.6,234.0 340.1,243.5 329.2,259.7" fill="#a9a02a"/>
<path d="M311.5 229.3 L327.2 249.0 M301.5 254.2 L327.2 249.0" stroke="#6b6a2a" stroke-width="0.7" fill="none"/>
<path d="M311.5 229.3 L338.6 234.0 L327.2 249.0 L301.0 245.3 Z M301.0 245.3 L301.5 254.2 L329.2 259.7 L340.1 243.5 M327.2 249.0 L329.2 259.7 M340.1 243.5 L338.6 234.0" stroke="#27d6dc" stroke-width="2.2" fill="none"/>
<path d="M311.5 229.3 L338.6 234.0 L327.2 249.0 L301.0 245.3 Z M301.0 245.3 L301.5 254.2 L329.2 259.7 L340.1 243.5 M327.2 249.0 L329.2 259.7 M340.1 243.5 L338.6 234.0" stroke="#b9f4f0" stroke-width="0.6" fill="none"/>
</g>
</svg>
<div class="abs" style="left:1300.0px;top:20.0px;width:20.0px;height:650.0px;background:#242424;border-radius:0;"></div>
<div class="abs" style="left:1300.0px;top:26.0px;width:15.4px;height:36.5px;background:#2c2c2c;border-radius:0 4px 4px 0;"></div><div class="t" style="left:1308.6px;top:44.2px;color:#dadada;transform:translate(-50%,-50%) rotate(-90deg)">Item</div>
<div class="abs" style="left:1300.0px;top:69.8px;width:15.4px;height:32.2px;background:#2c2c2c;border-radius:0 4px 4px 0;"></div><div class="t" style="left:1308.6px;top:85.9px;color:#dadada;transform:translate(-50%,-50%) rotate(-90deg)">Tool</div>
<div class="abs" style="left:1300.0px;top:109.4px;width:15.4px;height:38.3px;background:#2c2c2c;border-radius:0 4px 4px 0;"></div><div class="t" style="left:1308.6px;top:128.6px;color:#dadada;transform:translate(-50%,-50%) rotate(-90deg)">View</div>
<div class="abs" style="left:1300.0px;top:155.0px;width:15.4px;height:30.4px;background:#2c2c2c;border-radius:0 4px 4px 0;"></div><div class="t" style="left:1308.6px;top:170.2px;color:#dadada;transform:translate(-50%,-50%) rotate(-90deg)">Edit</div>
<div class="abs" style="left:1300.0px;top:193.2px;width:15.4px;height:67.6px;background:#2c2c2c;border-radius:0 4px 4px 0;"></div><div class="t" style="left:1308.6px;top:227.0px;color:#dadada;transform:translate(-50%,-50%) rotate(-90deg)">NNS Scene</div>
<div class="abs" style="left:1300.0px;top:268.0px;width:15.4px;height:47.0px;background:#4b4b4b;border-radius:0 4px 4px 0;"></div><div class="t" style="left:1308.6px;top:291.5px;color:#ffffff;transform:translate(-50%,-50%) rotate(-90deg)">UV Fix</div>
<div class="abs" style="left:-6.0px;top:-6.0px;width:12.8px;height:21.7px;background:#3f3f3f;border-radius:4px;"></div>
<div class="abs" style="left:9.1px;top:-6.0px;width:31.8px;height:21.7px;background:#3f3f3f;border-radius:4px;"></div>
<div class="t" style="left:15.3px;top:1.7px;color:#e2e2e2;">Add</div>
<div class="abs" style="left:43.2px;top:-6.0px;width:38.6px;height:21.7px;background:#3f3f3f;border-radius:4px;"></div>
<div class="t" style="left:49.3px;top:1.7px;color:#e2e2e2;">Mesh</div>
<div class="abs" style="left:84.1px;top:-6.0px;width:46.0px;height:21.7px;background:#3f3f3f;border-radius:4px;"></div>
<div class="t" style="left:90.3px;top:1.7px;color:#e2e2e2;">Vertex</div>
<div class="abs" style="left:132.4px;top:-6.0px;width:36.3px;height:21.7px;background:#3f3f3f;border-radius:4px;"></div>
<div class="t" style="left:138.3px;top:1.7px;color:#e2e2e2;">Edge</div>
<div class="abs" style="left:171.0px;top:-6.0px;width:36.4px;height:21.7px;background:#3f3f3f;border-radius:4px;"></div>
<div class="t" style="left:177.3px;top:1.7px;color:#e2e2e2;">Face</div>
<div class="abs" style="left:209.9px;top:-6.0px;width:28.1px;height:21.7px;background:#3f3f3f;border-radius:4px;"></div>
<div class="t" style="left:216.3px;top:1.7px;color:#e2e2e2;">UV</div>
<div class="t" style="left:-3.5px;top:1.7px;color:#e2e2e2;">t</div>
<div class="abs" style="left:1065.2px;top:-6.0px;width:31.5px;height:22.3px;background:#2a2a2a;border-radius:4px;"></div>
<div class="abs" style="left:1102.5px;top:-6.0px;width:18.6px;height:22.3px;background:#5680c2;border-radius:4px 0 0 4px;"></div>
<div class="abs" style="left:1121.1px;top:-6.0px;width:20.7px;height:22.3px;background:#2a2a2a;border-radius:0 4px 4px 0;"></div>
<div class="abs" style="left:1147.6px;top:-6.0px;width:18.5px;height:22.3px;background:#5680c2;border-radius:4px 0 0 4px;"></div>
<div class="abs" style="left:1166.1px;top:-6.0px;width:20.3px;height:22.3px;background:#2a2a2a;border-radius:0 4px 4px 0;"></div>
<div class="abs" style="left:1192.3px;top:-6.0px;width:18.9px;height:22.3px;background:#545454;border-radius:4px;"></div>
<div class="abs" style="left:1217.5px;top:-6.0px;width:18.6px;height:22.3px;background:#545454;border-radius:4px 0 0 4px;"></div>
<div class="abs" style="left:1236.7px;top:-6.0px;width:18.8px;height:22.3px;background:#545454;border-radius:0;"></div>
<div class="abs" style="left:1255.8px;top:-6.0px;width:18.5px;height:22.3px;background:#5680c2;border-radius:0;"></div>
<div class="abs" style="left:1274.6px;top:-6.0px;width:19.2px;height:22.3px;background:#545454;border-radius:0;"></div>
<div class="abs" style="left:1294.0px;top:-6.0px;width:19.5px;height:22.3px;background:#2a2a2a;border-radius:0 4px 4px 0;"></div>
<div class="abs" style="left:1101.0px;top:20.0px;width:199.0px;height:109.5px;background:#383838;border-radius:0;"></div>
<div class="abs" style="left:1101.0px;top:20.0px;width:199.0px;height:24.0px;background:#4b4b4b;border-radius:0;"></div>
<div class="t" style="left:1122.5px;top:27.1px;color:#f0f0f0;font-size:12.7px;">UVFix</div>
<div class="t" style="left:1135.0px;top:56.5px;color:#e6e6e6;">UV Fixing for DS</div>
<div class="abs" style="left:1110.0px;top:78.0px;width:182.0px;height:18.4px;background:#585858;border-radius:3px;"></div>
<div class="t" style="left:1169.4px;top:81.5px;color:#e8e8e8;">UV Fix the Mesh</div>
<div class="abs" style="left:1110.0px;top:103.0px;width:182.0px;height:18.4px;background:#585858;border-radius:3px;overflow:hidden;background:linear-gradient(90deg,#5680c2 0,#5680c2 47px,#585858 47px)"></div>
<div class="t" style="left:1120.0px;top:106.5px;color:#f0f0f0;">UV Threshold</div>
<div class="t" style="right:35.0px;top:106.5px;color:#f0f0f0;letter-spacing:0.5px;">1300</div>
<svg width="1320" height="670" viewBox="0 0 1320 670" fill="none" stroke-linecap="round" stroke-linejoin="round">
<path d="M1071.3 3.6q5.3 -6.4 10.6 0q-5.3 6.4 -10.6 0z" fill="#e8e8e8"/><circle cx="1076.6" cy="3.3" r="2.2" fill="#2a2a2a"/><circle cx="1076.6" cy="3.3" r="0.9" fill="#e8e8e8"/>
<path d="M1068.2 6.2l8 3.2l-3.6 1.2l-1.3 3.5z" fill="#e8e8e8"/>
<path d="M1087.0 6.3l3.4 3.0l3.4 -3.0" stroke="#e6e6e6" stroke-width="1.5"/>
<circle cx="1106.9" cy="11.6" r="1.7" stroke="#fff" stroke-width="1.2"/>
<path d="M1108.2 10.3L1116.8 1.7" stroke="#fff" stroke-width="1.2"/>
<path d="M1113.6 0.6h4.4v4.4z" fill="#fff"/>
<path d="M1105.3 3.2q10.2 1.2 11.6 10.4" stroke="#fff" stroke-width="1.2"/>
<path d="M1127.7 6.3l3.4 3.0l3.4 -3.0" stroke="#e6e6e6" stroke-width="1.5"/>
<circle cx="1158.6" cy="4.6" r="5.3" fill="#fff"/>
<circle cx="1154.9" cy="9.3" r="4.6" stroke="#fff" stroke-width="1.2"/>
<path d="M1156.2 4.9a4.6 4.6 0 0 1 3.2 3.6" stroke="#5680c2" stroke-width="1"/>
<path d="M1172.8 6.3l3.4 3.0l3.4 -3.0" stroke="#e6e6e6" stroke-width="1.5"/>
<rect x="1199" y="-0.6" width="10.3" height="10.3" stroke="#c8c8c8" stroke-width="1"/>
<rect x="1195.3" y="3.2" width="10.2" height="10.3" fill="#545454" stroke="#e6e6e6" stroke-width="1.2"/>
<path d="M1199.5 6.3v3.6M1199.5 9.9h0.5M1202.3 9.9h0.6" stroke="#e0e0e0" stroke-width="1.1" stroke-linecap="butt"/>
<g stroke="#cfcfcf" stroke-width="1.1"><circle cx="1227" cy="6.8" r="6.6"/><path d="M1220.4 6.8h13.2M1227 0.2v13.2M1222 2.6q5 2.6 10 0M1222 11q5 -2.6 10 0" /></g>
<circle cx="1246.1" cy="6.8" r="6.9" fill="#c9c9c9"/>
<circle cx="1265.2" cy="6.8" r="6.6" stroke="#fff" stroke-width="1.3"/>
<path d="M1265.2 0.5a6.3 6.3 0 0 0 -5.6 9.3l5.6 -3z" fill="#fff"/><path d="M1265.2 6.8l-5.2 3.4a6.3 6.3 0 0 0 8.6 2z" fill="#fff"/>
<circle cx="1284.1" cy="6.8" r="6.6" stroke="#d6d6d6" stroke-width="1.2"/>
<path d="M1279.6 5.6a4.9 4.9 0 0 1 3.6 -3.6" stroke="#d6d6d6" stroke-width="1.4"/>
<path d="M1285.4 12.2l0.4 -1.5M1287.3 11.4l0.4 -1.6M1288.9 10l0.4 -1.6" stroke="#bdbdbd" stroke-width="0.9"/>
<path d="M1299.9 6.3l3.4 3.0l3.4 -3.0" stroke="#e6e6e6" stroke-width="1.5"/>
<path d="M1110.2 29.6h5.6l-2.8 5.2z" fill="#c8c8c8"/>
<g fill="#9a9a9a"><rect x="1283.2" y="30.3" width="1.1" height="1.1"/><rect x="1283.2" y="33.5" width="1.1" height="1.1"/><rect x="1286.2" y="30.3" width="1.1" height="1.1"/><rect x="1286.2" y="33.5" width="1.1" height="1.1"/><rect x="1289.2" y="30.3" width="1.1" height="1.1"/><rect x="1289.2" y="33.5" width="1.1" height="1.1"/><rect x="1292.2" y="30.3" width="1.1" height="1.1"/><rect x="1292.2" y="33.5" width="1.1" height="1.1"/></g>
<path d="M1125.9 55.1L1120.9 60.1M1120.8 56.4v3.9h3.9M1112.1 68.9L1117.3 63.6M1113.5 63.4h3.9v4.2" stroke="#f2f2f2" stroke-width="1.2" stroke-linecap="butt"/>
<path d="M1114.6 61.5v-3.9h3.9M1119.4 66.5h4.2v-4.4" stroke="#a9a9a9" stroke-width="1.1" stroke-linecap="butt"/>
<path d="M1117.7 83.5v-3.1h10.1v9.9h-3.1M1117.7 83.5v6.8h7M1114.3 93.4l3.4 -3.1M1124.7 83.5l3.1 -3.1M1114.3 83.5l3.4 -3.1M1124.7 93.4l3.1 -3.1" stroke="#c4c4c4" stroke-width="0.9"/>
<rect x="1114.3" y="83.5" width="10.4" height="9.9" stroke="#fff" stroke-width="1.3"/>
<path d="M1050.6 70.1L1050.8 46.6" stroke="#2e8cec" stroke-width="2"/>
<path d="M1050.6 70.1L1059.7 48.5" stroke="#6d9f1a" stroke-width="2"/>
<path d="M1050.6 70.1L1082 75.1" stroke="#e8334f" stroke-width="2"/>
<circle cx="1051.3" cy="93.3" r="6.6" fill="#8c98ac" stroke="#2e7bd6" stroke-width="1.2"/>
<circle cx="1042.8" cy="90.6" r="7" fill="#5a6a2a" stroke="#8ad01c" stroke-width="1.4"/>
<circle cx="1020" cy="64.4" r="7.2" fill="#8d5a68" stroke="#d93a52" stroke-width="1.2"/>
<circle cx="1059.7" cy="48.5" r="7.4" fill="#6d9f1a"/>
<text x="1056.6" y="52.6" font-size="11.5" fill="#1a2a06" stroke="none">Y</text>
<circle cx="1050.8" cy="46.6" r="8" fill="#2e8cec"/>
<text x="1047" y="50.8" font-size="12" fill="#0b1e3a" stroke="none">Z</text>
<circle cx="1082" cy="75.1" r="8" fill="#e8334f"/>
<text x="1078.3" y="79.4" font-size="12" fill="#3a0a12" stroke="none">X</text>
<circle cx="1079" cy="124.5" r="13.6" fill="#000" fill-opacity="0.22"/>
<circle cx="1079" cy="155.0" r="13.6" fill="#000" fill-opacity="0.22"/>
<circle cx="1079" cy="185.0" r="13.6" fill="#000" fill-opacity="0.22"/>
<circle cx="1079" cy="215.0" r="13.6" fill="#000" fill-opacity="0.22"/>
<path d="M1075.9 128.1L1071.6 132.2" stroke="#e9e9e9" stroke-width="2"/>
<circle cx="1080.8" cy="123.5" r="6.3" fill="#e3e3e3"/>
<path d="M1077.6 123.5h6.4M1080.8 120.3v6.4" stroke="#555" stroke-width="1.2" stroke-linecap="butt"/>
<path d="M1074.6 156.2v-5.4a1 1 0 0 1 2 0v3.6l0.3 -6a1 1 0 0 1 2 0l0.2 5.8l0.6 -5.4a1 1 0 0 1 2 0.2l-0.5 6l1.9 -4.2a1 1 0 0 1 1.8 0.9l-2.2 6.3q-1.2 4.6 -5 4.6q-3.4 0 -5.6 -3.4l-3.2 -3.8q0.6 -1.6 2.4 -0.8z" fill="#ebebeb"/>
<circle cx="1074.2" cy="181.9" r="2.6" fill="#ededed"/><circle cx="1081.1" cy="180.5" r="3.5" fill="#ededed"/><circle cx="1074.2" cy="181.9" r="0.9" fill="#555"/><circle cx="1081.1" cy="180.5" r="1" fill="#555"/>
<rect x="1075.6" y="185" width="7" height="7.8" rx="0.8" fill="#ededed"/><path d="M1083.2 189.2l3.6 -2.6v6.4zM1072.6 187.4l2.4 1.2v1.6l-2.4 1.2z" fill="#ededed"/>
<path d="M1074.1 209.3h9.8l2.9 11.9h-15.5zM1077.4 209.3l-1 11.9M1080.6 209.3l1 11.9M1073.2 213h11.6M1072.3 216.9h13.4" stroke="#ededed" stroke-width="1.2" stroke-linejoin="miter"/>
</svg>
</div>
<div id="img">
<div class="abs" style="left:0.0px;top:0.0px;width:1320.0px;height:25.3px;background:#3b3b3b;border-radius:0;"></div>
<div class="t" style="left:-3.3px;top:7.8px;color:#dcdcdc;">t</div>
<div class="t" style="left:17.4px;top:7.8px;color:#dedede;">Image</div>
<div class="t" style="left:63.4px;top:7.8px;color:#dedede;">UV</div>
<div class="abs" style="left:301.7px;top:3.7px;width:30.9px;height:18.6px;background:#2c2c2c;border-radius:4px;box-shadow:0 0 0 0.8px #474747;"></div>
<div class="abs" style="left:338.9px;top:3.7px;width:18.5px;height:18.6px;background:#5a5a5a;border-radius:4px 0 0 4px;"></div>
<div class="abs" style="left:357.4px;top:3.7px;width:31.8px;height:18.6px;background:#2c2c2c;border-radius:0 4px 4px 0;box-shadow:0 0 0 0.8px #474747;"></div>
<div class="abs" style="left:396.0px;top:3.7px;width:18.0px;height:18.6px;background:#5a5a5a;border-radius:4px 0 0 4px;"></div>
<div class="abs" style="left:414.0px;top:3.7px;width:32.0px;height:18.6px;background:#353535;border-radius:0 4px 4px 0;box-shadow:0 0 0 0.8px #474747;"></div>
<div class="abs" style="left:452.7px;top:3.7px;width:30.6px;height:18.6px;background:#2c2c2c;border-radius:4px 0 0 4px;box-shadow:0 0 0 0.8px #474747;"></div>
<div class="abs" style="left:483.3px;top:3.7px;width:120.0px;height:18.6px;background:#1f1f1f;border-radius:0;box-shadow:inset 0 0 0 1px #3a3a3a;"></div>
<div class="t" style="left:491.3px;top:7.8px;color:#e6e6e6;">rock.tga</div>
<div class="abs" style="left:603.4px;top:3.7px;width:23.6px;height:18.6px;background:#5a5a5a;border-radius:0;"></div>
<div class="t" style="left:611.5px;top:7.8px;color:#e6e6e6;">2</div>
<div class="abs" style="left:628.0px;top:3.7px;width:19.2px;height:18.6px;background:#5a5a5a;border-radius:0;"></div>
<div class="abs" style="left:648.2px;top:3.7px;width:19.0px;height:18.6px;background:#5a5a5a;border-radius:0;"></div>
<div class="abs" style="left:668.2px;top:3.7px;width:19.2px;height:18.6px;background:#5a5a5a;border-radius:0;"></div>
<div class="abs" style="left:688.4px;top:3.7px;width:18.8px;height:18.6px;background:#5a5a5a;border-radius:0 4px 4px 0;"></div>
<div class="abs" style="left:1096.0px;top:3.7px;width:18.0px;height:18.6px;background:#5680c2;border-radius:4px 0 0 4px;"></div>
<div class="abs" style="left:1114.0px;top:3.7px;width:19.8px;height:18.6px;background:#2c2c2c;border-radius:0 4px 4px 0;box-shadow:0 0 0 0.8px #474747;"></div>
<div class="abs" style="left:1140.6px;top:3.7px;width:129.8px;height:18.6px;background:#1f1f1f;border-radius:4px;box-shadow:inset 0 0 0 1px #3a3a3a;"></div>
<div class="t" style="left:1148.0px;top:7.9px;color:#e6e6e6;">UVMap</div>
<div class="abs" style="left:1281.8px;top:3.7px;width:30.8px;height:18.6px;background:#2c2c2c;border-radius:4px;box-shadow:0 0 0 0.8px #474747;"></div>
<div class="abs" style="left:1101.0px;top:25.3px;width:199.0px;height:212.0px;background:#3a3a3a;border-radius:0;"></div>
<div class="abs" style="left:1300.0px;top:25.3px;width:20.0px;height:212.0px;background:#242424;border-radius:0;"></div>
<div class="abs" style="left:1101.0px;top:25.3px;width:199.0px;height:23.7px;background:#4b4b4b;border-radius:0;"></div>
<div class="t" style="left:1123.0px;top:31.8px;color:#f0f0f0;font-size:12.7px;">UV Vertex</div>
<div class="abs" style="left:1109.7px;top:57.7px;width:182.6px;height:18.6px;background:#585858;border-radius:4px 4px 0 0;"></div>
<div class="abs" style="left:1109.7px;top:77.3px;width:182.6px;height:18.7px;background:#585858;border-radius:0 0 4px 4px;"></div>
<div class="t" style="left:1125.0px;top:61.5px;color:#e6e6e6;">X</div>
<div class="t" style="left:1125.0px;top:80.7px;color:#e6e6e6;">Y</div>
<div class="t" style="right:40.5px;top:61.5px;color:#e6e6e6;letter-spacing:0.45px;">-2148.00</div>
<div class="t" style="right:40.5px;top:80.7px;color:#e6e6e6;letter-spacing:0.45px;">1920.00</div>
<div class="abs" style="left:1101.0px;top:105.0px;width:199.0px;height:24.0px;background:#4b4b4b;border-radius:0;"></div>
<div class="t" style="left:1123.0px;top:111.8px;color:#f0f0f0;font-size:12.7px;">Image</div>
<div class="t" style="right:142.7px;top:141.9px;color:#e6e6e6;">Source</div>
<div class="abs" style="left:1187.6px;top:137.8px;width:104.6px;height:18.6px;background:#2c2c2c;border-radius:4px;box-shadow:0 0 0 0.8px #474747;"></div>
<div class="t" style="left:1195.3px;top:141.9px;color:#e0e0e0;">Single Image</div>
<div class="abs" style="left:1110.0px;top:167.9px;width:18.3px;height:18.4px;background:#585858;border-radius:4px 0 0 4px;"></div>
<div class="abs" style="left:1128.6px;top:167.9px;width:124.2px;height:18.4px;background:#1f1f1f;border-radius:0;box-shadow:inset 0 0 0 1px #3a3a3a;"></div>
<div class="t" style="left:1136.0px;top:172.1px;color:#e6e6e6;">/home/prellit/Bureau/...</div>
<div class="abs" style="left:1253.2px;top:167.9px;width:18.6px;height:18.4px;background:#585858;border-radius:0;"></div>
<div class="abs" style="left:1272.6px;top:167.9px;width:19.6px;height:18.4px;background:#585858;border-radius:0 4px 4px 0;"></div>
<div class="t" style="right:28.0px;top:193.8px;color:#e6e6e6;">64 x 64,&nbsp; RGBA byte</div>
<div class="t" style="right:142.7px;top:223.7px;color:#e6e6e6;">Color Space</div>
<div class="abs" style="left:1187.6px;top:219.9px;width:104.6px;height:18.6px;background:#2c2c2c;border-radius:4px;box-shadow:0 0 0 0.8px #474747;"></div>
<div class="t" style="left:1195.3px;top:223.7px;color:#e0e0e0;">sRGB</div>
<div class="abs" style="left:1300.0px;top:31.2px;width:16.0px;height:45.0px;background:#4b4b4b;border-radius:0 4px 4px 0;"></div><div class="t" style="left:1308.9px;top:53.7px;color:#ffffff;transform:translate(-50%,-50%) rotate(-90deg)">Image</div>
<div class="abs" style="left:1300.0px;top:81.8px;width:16.0px;height:34.4px;background:#2c2c2c;border-radius:0 4px 4px 0;"></div><div class="t" style="left:1308.9px;top:99.0px;color:#dadada;transform:translate(-50%,-50%) rotate(-90deg)">Tool</div>
<div class="abs" style="left:1300.0px;top:122.0px;width:16.0px;height:39.2px;background:#2c2c2c;border-radius:0 4px 4px 0;"></div><div class="t" style="left:1308.9px;top:141.6px;color:#dadada;transform:translate(-50%,-50%) rotate(-90deg)">View</div>
<div class="abs" style="left:1300.0px;top:167.0px;width:16.0px;height:62.4px;background:#2c2c2c;border-radius:0 4px 4px 0;"></div><div class="t" style="left:1308.9px;top:198.2px;color:#dadada;transform:translate(-50%,-50%) rotate(-90deg)">Magic UV</div>
<svg width="1320" height="236" viewBox="0 673 1320 236" fill="none" stroke-linecap="round" stroke-linejoin="round">
<path d="M306.2 683v-3.6h3.7M316 679.4h3.7v3.6M319.7 689v3.6h-3.7M309.9 692.6h-3.7v-3.6" stroke="#bdbdbd" stroke-width="1" stroke-linecap="butt" stroke-linejoin="miter"/>
<circle cx="312.9" cy="686.1" r="2" fill="#e6e6e6"/>
<path d="M323.2 685.4l3.1 2.8l3.1 -2.8" stroke="#e6e6e6" stroke-width="1.4"/>
<g transform="translate(348 686.2) rotate(45) scale(1.15)"><path d="M-4.6 5.2v-5.8a4.6 4.6 0 0 1 9.2 0v5.8h-2.7v-5.8a1.9 1.9 0 0 0 -3.8 0v5.8z" stroke="#9c9c9c" stroke-width="0.9"/></g>
<path d="M360.3 688.9h12.4M360.3 685.4v6.6M372.7 685.4v6.6M363.4 687.2v3.4M366.5 686.6v5.2M369.6 687.2v3.4" stroke="#d4d4d4" stroke-width="1.1" stroke-linecap="butt"/>
<rect x="370" y="679.4" width="3.9" height="3.6" fill="#dcdcdc"/>
<path d="M380.2 685.4l3.1 2.8l3.1 -2.8" stroke="#e6e6e6" stroke-width="1.4"/>
<circle cx="405" cy="686" r="6.6" stroke="#cfcfcf" stroke-width="0.8"/><circle cx="405" cy="686" r="4.3" stroke="#e6e6e6" stroke-width="1.5"/><circle cx="405" cy="686" r="1.9" fill="#e6e6e6"/>
<path d="M419.3 691.9c4.4 -0.4 4.2 -12 6.8 -12s2.4 11.6 6.8 12" stroke="#b0b0b0" stroke-width="1.1"/>
<path d="M437.2 685.4l3.1 2.8l3.1 -2.8" stroke="#666" stroke-width="1.4"/>
<path d="M457.3 685.5v-6.1h13.5v13.2h-3.6" stroke="#ececec" stroke-width="1.2" stroke-linejoin="miter" stroke-linecap="butt"/>
<path d="M461.5 685l4.6 7.8h-9.2z" fill="#dedede"/><circle cx="466.4" cy="683.4" r="1.6" fill="#e6e6e6"/>
<path d="M474.2 685.4l3.1 2.8l3.1 -2.8" stroke="#e6e6e6" stroke-width="1.4"/>
<path d="M636.4 679.9q-3 2 -6.3 2.1q-0.2 8 6.3 11q6.5 -3 6.3 -11q-3.3 -0.1 -6.3 -2.1z" stroke="#a8a8a8" stroke-width="1"/>
<path d="M654.6 683.6h-4.3v9.3h8.3v-3" stroke="#d8d8d8" stroke-width="1.1" stroke-linejoin="miter"/>
<path d="M654.7 679.6h5.6l3.6 3.6v6h-9.2z" stroke="#e8e8e8" stroke-width="1.2" stroke-linejoin="miter"/><path d="M660.3 679.6v3.6h3.6z" fill="#e8e8e8"/>
<path d="M670.2 680.4h5l1.2 1.8h7.5v1.6h-13.7zM670.2 684.8h13.7v7.6h-13.7z" fill="#e8e8e8"/>
<path d="M693.5 682.2l7.1 7.1M700.6 682.2l-7.1 7.1" stroke="#e8e8e8" stroke-width="1.3"/>
<path d="M716 692.4l6.2 -6.2" stroke="#b8b8b8" stroke-width="1"/><path d="M719.6 683.6l5.8 5.8M721.6 685l3.4 -4.2l-1 -1.2l4.8 4.8l-1.4 -0.8l-4 3.6" stroke="#b8b8b8" stroke-width="1.1"/>
<circle cx="1106.9" cy="684" r="4.9" fill="#fff"/><circle cx="1103.6" cy="688.4" r="4.3" stroke="#fff" stroke-width="1.2"/><path d="M1104.8 684.2a4.3 4.3 0 0 1 3 3.4" stroke="#5680c2" stroke-width="1"/>
<path d="M1120.9 685.4l3.1 2.8l3.1 -2.8" stroke="#e6e6e6" stroke-width="1.4"/>
<rect x="1286.6" y="679.6" width="13.2" height="13" fill="#e4e4e4"/><path d="M1287.2 680.2h12l0 12z" fill="#222"/><path d="M1290.8 685.6l3.6 6.4h-6.6z" fill="#5a5a5a"/><circle cx="1296.4" cy="683.6" r="1.5" fill="#e4e4e4"/>
<path d="M1303.2 685.4l3.1 2.8l3.1 -2.8" stroke="#e6e6e6" stroke-width="1.4"/>
<circle cx="1078" cy="720.4" r="13.6" fill="#000" fill-opacity="0.2"/><circle cx="1078" cy="750.4" r="13.6" fill="#000" fill-opacity="0.2"/>
<g transform="translate(-1 595.9)"><path d="M1075.9 128.1L1071.6 132.2" stroke="#e9e9e9" stroke-width="2"/><circle cx="1080.8" cy="123.5" r="6.3" fill="#e3e3e3"/><path d="M1077.6 123.5h6.4M1080.8 120.3v6.4" stroke="#333" stroke-width="1.3" stroke-linecap="butt"/></g>
<g transform="translate(-1 595.4)"><path d="M1074.6 156.2v-5.4a1 1 0 0 1 2 0v3.6l0.3 -6a1 1 0 0 1 2 0l0.2 5.8l0.6 -5.4a1 1 0 0 1 2 0.2l-0.5 6l1.9 -4.2a1 1 0 0 1 1.8 0.9l-2.2 6.3q-1.2 4.6 -5 4.6q-3.4 0 -5.6 -3.4l-3.2 -3.8q0.6 -1.6 2.4 -0.8z" fill="#ebebeb"/></g>
<path d="M1110.2 707.6h5.6l-2.8 5.2z" fill="#c8c8c8"/>
<g fill="#a0a0a0"><rect x="1283.2" y="708.5" width="1.1" height="1.1"/><rect x="1283.2" y="711.7" width="1.1" height="1.1"/><rect x="1286.2" y="708.5" width="1.1" height="1.1"/><rect x="1286.2" y="711.7" width="1.1" height="1.1"/><rect x="1289.2" y="708.5" width="1.1" height="1.1"/><rect x="1289.2" y="711.7" width="1.1" height="1.1"/><rect x="1292.2" y="708.5" width="1.1" height="1.1"/><rect x="1292.2" y="711.7" width="1.1" height="1.1"/></g>
<path d="M1110.2 787.4h5.6l-2.8 5.2z" fill="#c8c8c8"/>
<g fill="#a0a0a0"><rect x="1283.2" y="788.3" width="1.1" height="1.1"/><rect x="1283.2" y="791.5" width="1.1" height="1.1"/><rect x="1286.2" y="788.3" width="1.1" height="1.1"/><rect x="1286.2" y="791.5" width="1.1" height="1.1"/><rect x="1289.2" y="788.3" width="1.1" height="1.1"/><rect x="1289.2" y="791.5" width="1.1" height="1.1"/><rect x="1292.2" y="788.3" width="1.1" height="1.1"/><rect x="1292.2" y="791.5" width="1.1" height="1.1"/></g>
<path d="M1282.7 819.2l2.9 2.6l2.9 -2.6" stroke="#e0e0e0" stroke-width="1.3"/>
<path d="M1282.7 901.2l2.9 2.6l2.9 -2.6" stroke="#e0e0e0" stroke-width="1.3"/>
<path d="M1113.4 853.4v-3.6l3.4 -3.6h8.6v3.6l-3.4 3.6zM1113.4 849.8h8.6l3.4 -3.6M1122 849.8v3.6" stroke="#cdcdcd" stroke-width="1" />
<path d="M1256.2 844.4h4.6l1.1 1.6h6.7v1.4h-12.4zM1256.2 848.2h12.4v7h-12.4z" fill="#e8e8e8"/>
<path d="M1276.6 848.6a5.6 5.6 0 0 1 10 -2.2M1288.2 851.4a5.6 5.6 0 0 1 -10 2.4" stroke="#e2e2e2" stroke-width="1.2"/><path d="M1287.6 843.2v3.8h-3.8M1277.2 857v-3.8h3.8" stroke="#e2e2e2" stroke-width="1.2"/>
<path d="M210 698.3V726.4" stroke="#7cba2c" stroke-width="2" stroke-linecap="butt"/>
<polygon points="209.6,739.4 235,739.4 235,762.6" fill="#999"/><polygon points="209.6,739.4 235,762.6 209.6,762.6" fill="#6e6e6e"/>
<path d="M209.6 762.6h25.4v-23.2h-9" stroke="#111" stroke-width="1.1" stroke-linecap="butt"/>
<path d="M209.6 739.4L235 762.6" stroke="#111" stroke-width="2.4"/><path d="M209.6 739.4L235 762.6" stroke="#fff" stroke-width="1"/><path d="M209.6 739.4L222 750.8" stroke="#ff9a3a" stroke-width="1"/>
<path d="M209.6 739.4V762.6" stroke="#ff9a3a" stroke-width="1.2"/><path d="M209.6 751V762.6" stroke="#f2f2f2" stroke-width="1.2"/>
<circle cx="209.6" cy="762.6" r="1.7" fill="#000"/><circle cx="235" cy="762.6" r="1.7" fill="#000"/><circle cx="235" cy="739.6" r="1.5" fill="#000"/>
<path d="M224.6 740H284" stroke="#e8334f" stroke-width="2" stroke-linecap="butt"/><path d="M283 735.2l18.8 4.8l-18.8 4.8z" fill="#e8334f"/>
<circle cx="209.9" cy="739.9" r="15.4" stroke="#d8d8d8" stroke-width="1.7"/>
<circle cx="209.8" cy="739.6" r="1.9" fill="#ff8c1a"/>
<circle cx="344.4" cy="859.4" r="10.2" stroke="#f0f0f0" stroke-width="1.4"/><circle cx="344.4" cy="859.4" r="10.2" stroke="#e81a1a" stroke-width="1.4" stroke-dasharray="4.006 4.006" stroke-dashoffset="2" stroke-linecap="butt"/>
<path d="M324 859.4h15M349.2 859.4h14.8M344.4 840v14.8M344.4 865v14.8" stroke="#000" stroke-width="1.2" stroke-linecap="butt"/>
<rect x="344" y="856" width="4.2" height="4" fill="#a8782e"/>
</svg>
</div>
<div id="props"><div class="abs" style="left:0.0px;top:0.0px;width:14.0px;height:268.6px;background:#282828;border-radius:0 0 0 4px;"></div>
<div class="abs" style="left:0.0px;top:-5.1px;width:14.0px;height:20.0px;background:#2b2b2b;border-radius:0;"></div>
<div class="abs" style="left:0.0px;top:34.9px;width:14.0px;height:20.0px;background:#2b2b2b;border-radius:0;"></div>
<div class="abs" style="left:0.0px;top:74.9px;width:14.0px;height:20.0px;background:#2b2b2b;border-radius:0;"></div>
<div class="abs" style="left:0.0px;top:114.9px;width:14.0px;height:20.0px;background:#2b2b2b;border-radius:0;"></div>
<div class="abs" style="left:0.0px;top:154.9px;width:14.0px;height:20.0px;background:#2b2b2b;border-radius:0;"></div>
<div class="abs" style="left:0.0px;top:194.9px;width:14.0px;height:20.0px;background:#2b2b2b;border-radius:0;"></div>
<div class="abs" style="left:0.0px;top:234.9px;width:14.0px;height:20.0px;background:#2b2b2b;border-radius:0;"></div>
<div class="abs" style="left:0.0px;top:55.0px;width:14.0px;height:19.9px;background:#3e5e96;border-radius:0;"></div>
<div class="abs" style="left:0.0px;top:272.4px;width:14.0px;height:25.4px;background:#3d3d3d;border-radius:4px 0 0 0;"></div>
<div class="abs" style="left:9.0px;top:276.5px;width:6.0px;height:17.0px;background:#282828;border-radius:4px 0 0 4px;box-shadow:inset 0 0 0 1px #4a4a4a;"></div>
<div class="abs" style="left:0.0px;top:297.8px;width:14.0px;height:612.0px;background:#282828;border-radius:0 0 0 4px;"></div>
<div class="abs" style="left:0.0px;top:297.8px;width:1.8px;height:612.0px;background:#222;border-radius:0;"></div>
<div class="abs" style="left:1.8px;top:307.2px;width:12.0px;height:26.0px;background:#3a3a3a;border-radius:4px 0 0 4px;"></div>
<div class="abs" style="left:1.8px;top:342.9px;width:12.0px;height:26.0px;background:#3a3a3a;border-radius:4px 0 0 4px;"></div>
<div class="abs" style="left:1.8px;top:371.5px;width:12.0px;height:24.8px;background:#3a3a3a;border-radius:4px 0 0 4px;"></div>
<div class="abs" style="left:1.8px;top:399.4px;width:12.0px;height:25.0px;background:#3a3a3a;border-radius:4px 0 0 4px;"></div>
<div class="abs" style="left:1.8px;top:427.0px;width:12.0px;height:24.5px;background:#3a3a3a;border-radius:4px 0 0 4px;"></div>
<div class="abs" style="left:1.8px;top:454.8px;width:12.0px;height:25.6px;background:#3a3a3a;border-radius:4px 0 0 4px;"></div>
<div class="abs" style="left:1.8px;top:490.8px;width:12.0px;height:26.1px;background:#3a3a3a;border-radius:4px 0 0 4px;"></div>
<div class="abs" style="left:1.8px;top:526.8px;width:12.0px;height:26.5px;background:#3a3a3a;border-radius:4px 0 0 4px;"></div>
<div class="abs" style="left:1.8px;top:556.0px;width:12.0px;height:24.7px;background:#3a3a3a;border-radius:4px 0 0 4px;"></div>
<div class="abs" style="left:1.8px;top:583.8px;width:12.0px;height:25.5px;background:#3a3a3a;border-radius:4px 0 0 4px;"></div>
<div class="abs" style="left:1.8px;top:612.0px;width:12.0px;height:24.7px;background:#3a3a3a;border-radius:4px 0 0 4px;"></div>
<div class="abs" style="left:1.8px;top:639.3px;width:12.0px;height:25.5px;background:#3a3a3a;border-radius:4px 0 0 4px;"></div>
<div class="abs" style="left:1.8px;top:667.4px;width:12.0px;height:24.5px;background:#3a3a3a;border-radius:4px 0 0 4px;"></div>
<div class="abs" style="left:1.8px;top:695.0px;width:12.0px;height:25.8px;background:#454545;border-radius:4px 0 0 4px;"></div>
<svg width="13" height="910" viewBox="1322.8 0 13 910" fill="none" style="overflow:hidden"><path d="M1327.8 62.4v5.8M1329.6 60.7h6M1329.6 69.8h6" stroke="#b4c2dc" stroke-width="1"/><rect x="1326.2" y="59.1" width="3.3" height="3.3" stroke="#b4c2dc" stroke-width="1"/><rect x="1326.2" y="68.2" width="3.3" height="3.3" stroke="#b4c2dc" stroke-width="1"/><path d="M1333.6 313v6h3M1332 320h5v4h-5z" stroke="#e0e0e0" stroke-width="1.2" fill="#e0e0e0"/><path d="M1331.6 351h5v10h-5zM1333 349h3" stroke="#e0e0e0" stroke-width="1.3"/><path d="M1331 378h6v4h-6zM1333.4 382v7h3" stroke="#e0e0e0" stroke-width="1.3" fill="#e0e0e0"/><path d="M1331.8 406v11h4M1334 409v6h2" stroke="#d0d0d0" stroke-width="1.1"/><path d="M1331 445l3.4 -9h2v9z" fill="#dcdcdc"/><circle cx="1338" cy="468" r="6" stroke="#e0566a" stroke-width="1.4"/><path d="M1333 464l3 6" stroke="#e0566a" stroke-width="1.2"/><path d="M1332 499h5M1332 498v11h5" stroke="#e6e6e6" stroke-width="1.5"/><path d="M1336 533.6h-3.4v12.6h3.4" stroke="#e8944a" stroke-width="1.5"/><rect x="1335" y="536" width="3" height="8" fill="#e8944a"/><path d="M1331.6 571.6l5 -4.6" stroke="#5b8fe0" stroke-width="4" stroke-linecap="round"/><circle cx="1334" cy="591.4" r="2.4" fill="#5b8fe0"/><path d="M1334 593v10M1331.8 600.6l2.2 2.6l2.2 -2.6" stroke="#5b8fe0" stroke-width="1.2"/><circle cx="1338" cy="624.4" r="6.4" stroke="#5b8fe0" stroke-width="1.3"/><circle cx="1338" cy="652" r="6.2" stroke="#5b8fe0" stroke-width="1.4"/><circle cx="1338" cy="652" r="3" fill="#5b8fe0"/><path d="M1331.6 671.4h3.6v3.6h-3.6zM1335 676l2 4" stroke="#1fc79a" stroke-width="1.5"/><circle cx="1337.6" cy="708" r="6.4" fill="#e8606e"/><path d="M1332 711q3 -5 5 -1" stroke="#454545" stroke-width="1.6"/></svg></div>
<div id="status"><div class="t" style="left:5.3px;top:4.9px;color:#d0d0d0">Rotate View</div>
<div class="t" style="left:241px;top:4.9px;color:#d0d0d0">Call Menu</div>
<div class="t" style="left:1033px;top:4.9px;color:#d0d0d0">Cube.001 | Verts:4/18 | Edges:5/32 | Faces:2/18 | Tris:18 | Objects:1/2</div>
<svg width="1335" height="11" viewBox="0 909.7 1335 11"><path d="M219.5 922v-5.5a3.5 3.5 0 0 1 3.5 -3.5h1.2v9z" fill="#bdbdbd"/><path d="M225.3 913h1a3.5 3.5 0 0 1 3.5 3.5v5.5" fill="none" stroke="#8a8a8a" stroke-width="1"/></svg></div>
</body></html>
